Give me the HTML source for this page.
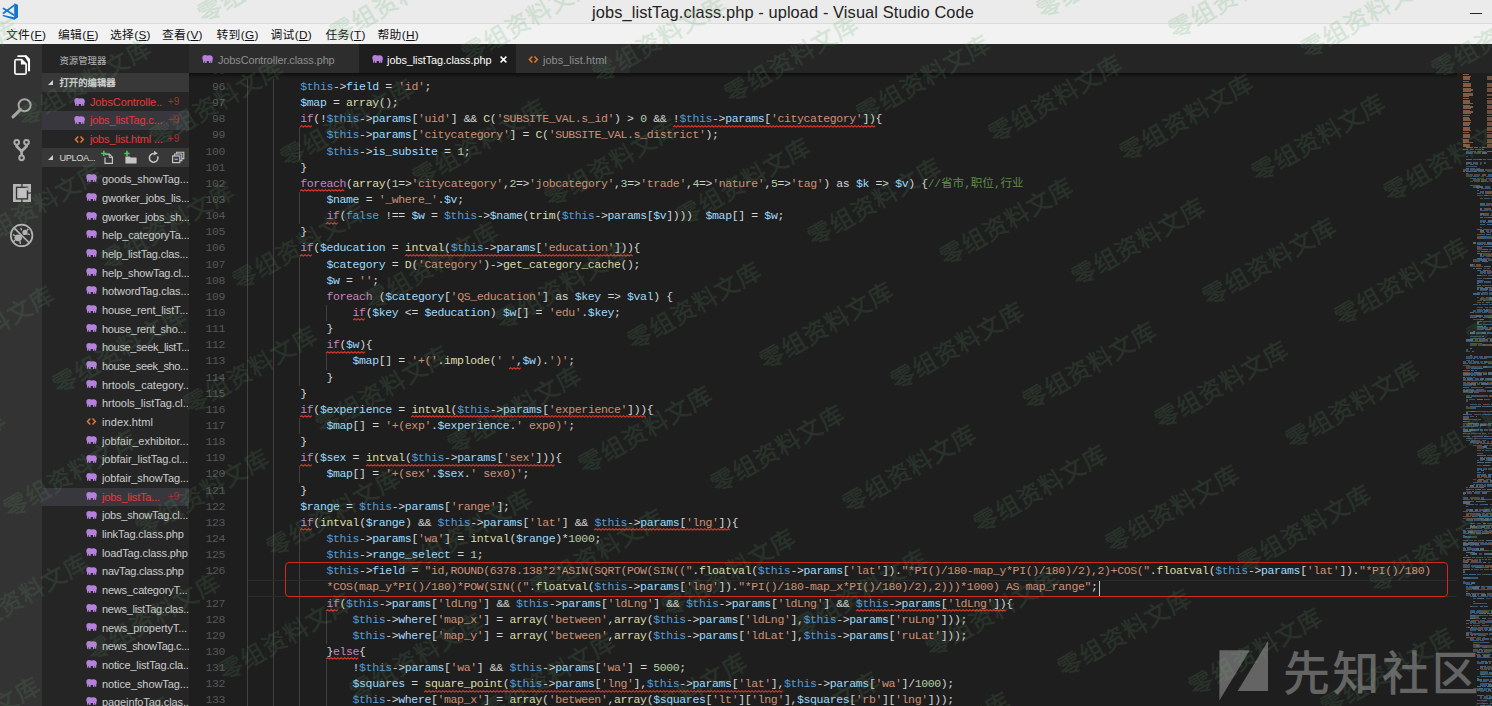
<!DOCTYPE html>
<html lang="zh-CN">
<head>
<meta charset="utf-8">
<title>jobs_listTag.class.php - upload - Visual Studio Code</title>
<style>
*{box-sizing:border-box;margin:0;padding:0}
html,body{width:1492px;height:706px;overflow:hidden;background:#1e1e1e}
body{position:relative;font-family:"Liberation Sans","Noto Sans CJK SC",sans-serif;font-size:11px;color:#ccc}
.abs{position:absolute}
#titlebar{position:absolute;left:0;top:0;width:1492px;height:24px;background:#ebebeb;border-bottom:1px solid #dcdcdc}
#titlebar .t{position:absolute;left:592px;top:0;height:24px;line-height:24px;font-size:16.4px;color:#222;white-space:nowrap}
#titlebar .min{position:absolute;left:1470px;top:13px;width:12px;height:1.3px;background:#222}
#menu{position:absolute;left:0;top:24px;width:1492px;height:20px;background:#f2f2f2}
#menu span{position:absolute;top:2px;height:20px;line-height:19px;font-size:11.8px;letter-spacing:0.3px;color:#111;white-space:nowrap}
#menu u{text-decoration:underline;text-underline-offset:1px}
#act{position:absolute;left:0;top:44px;width:42.4px;height:662px;background:#333333}
#side{position:absolute;left:42.4px;top:44px;width:146.8px;height:662px;background:#252526;overflow:hidden}
#side .hd{position:absolute;left:17px;top:8px;font-size:9.4px;color:#bdbdbd;line-height:18px;white-space:nowrap}
.sec{position:absolute;left:0;width:146.8px;height:18.6px;background:#383838;color:#d8d8d8;font-size:9.4px;font-weight:normal;-webkit-text-stroke:0.3px #d8d8d8;line-height:20.4px;white-space:nowrap}
.sec .tri{position:absolute;left:6px;top:7px;width:0;height:0;border-left:5px solid transparent;border-bottom:5px solid #d0d0d0}
.sec .tx{position:absolute;left:17px;top:0}
.oe{position:absolute;left:0;width:146.8px;height:18.68px;line-height:18.4px;font-size:11px;color:#e8383d;white-space:nowrap}
.oe.sel,.fr.sel{background:#37373d}
.oe .fi{position:absolute;left:31.2px;top:5.2px}
.oe .nm{position:absolute;left:47.5px;top:0}
.oe .bad{position:absolute;left:125.4px;top:0;font-size:10px;color:#a33434}
.fr{position:absolute;left:0;width:146.8px;height:18.68px;line-height:18px;font-size:11px;color:#cdcdcd;white-space:nowrap;overflow:hidden}
.fr .fi{position:absolute;left:43.4px;top:4.2px}
.fr .fn_{position:absolute;left:59.6px;top:0}
.fr.err{color:#e8383d}
.fr .bad{position:absolute;left:125.3px;top:0;font-size:10px;color:#a33434}
#tabs{position:absolute;left:189.2px;top:44px;width:1302.8px;height:29.4px;background:#252526}
.tab{position:absolute;top:0;height:29.4px;background:#2d2d2d;color:#8f8f8f;font-size:10.9px;line-height:32px;white-space:nowrap}
.tab.act{background:#1e1e1e;color:#fff}
.tab .fi{position:absolute;top:10.8px;left:12.4px}
.tab .nm{position:absolute;top:0}
#ed{position:absolute;left:189.2px;top:73.4px;width:1302.8px;height:632.6px;background:#1e1e1e;overflow:hidden}
#edin{position:absolute;left:-189.2px;top:-73.4px;width:1492px;height:706px}
.cl{position:absolute;left:248px;height:16.14px;line-height:16.14px;white-space:pre;font-family:"Liberation Mono","Noto Sans CJK SC",monospace;font-size:11.50px;letter-spacing:-0.3671px;color:#d4d4d4}
.ln{position:absolute;left:188px;width:37px;text-align:right;height:16.14px;line-height:16.14px;font-family:"Liberation Mono",monospace;font-size:11.50px;letter-spacing:-0.3671px;color:#575757}
.ig{position:absolute;width:1px;background:#404040}
.sq{position:absolute;overflow:visible}
.sq polyline{fill:none;stroke:#d8382b;stroke-width:1.05;stroke-linejoin:round}
.this,.cst{color:#569cd6}.var,.prop{color:#9cdcfe}.str{color:#ce9178}.num{color:#b5cea8}.kw{color:#c586c0}.fn{color:#dcdcaa}.cmt{color:#608b4e}.cj{font-size:11.6px;letter-spacing:0.02px}
#shadow{position:absolute;left:189.2px;top:73.4px;width:1268px;height:5px;background:linear-gradient(#000 0,rgba(0,0,0,0) 100%);opacity:.55}
#redbox{position:absolute;left:284.5px;top:562.2px;width:1163px;height:34.6px;border:1.2px solid #cf2a1c;border-radius:4px}
#curline{position:absolute;left:248px;top:580px;width:1209px;height:16.6px;border-top:1px solid #2b2b2b;border-bottom:1px solid #2b2b2b}
#cursor{position:absolute;top:581px;width:1.3px;height:14.5px;background:#c8c8c8}
#mm i{position:absolute;display:block;height:1.4px;opacity:.72}
#wm{position:absolute;left:0;top:44px;width:1492px;height:662px;overflow:hidden}#wmtop{position:absolute;left:0;top:0;width:1492px;height:44px;overflow:hidden}#wmtop .wm{color:rgb(95,175,105);-webkit-text-stroke:0.45px rgb(95,175,105);opacity:.2}.wm{position:absolute;white-space:nowrap;font-family:"Noto Sans CJK SC","Liberation Sans",sans-serif;font-size:24px;line-height:24px;height:24px;margin-top:-12px;color:rgb(120,190,125);-webkit-text-stroke:0.45px rgb(120,190,125);opacity:.125;transform-origin:0 50%;transform:rotate(-30deg);pointer-events:none;letter-spacing:1px}
#xz{position:absolute;left:1219px;top:641px;width:280px;height:62px;color:#5b5b5b}
#xz .tx{position:absolute;left:64px;top:0;font-family:"Noto Sans CJK SC","Liberation Sans",sans-serif;font-size:47px;line-height:58px;font-weight:500;white-space:nowrap;color:#646464;letter-spacing:2.5px}
</style>
</head>
<body>
<svg width="0" height="0" style="position:absolute">
 <defs>
  <g id="eleph" fill="#b681da">
   <circle cx="3.2" cy="3" r="2.9"/><ellipse cx="7.3" cy="3.2" rx="3.5" ry="3"/>
   <rect x="2.4" y="2" width="6" height="4"/>
   <rect x="1" y="3.6" width="1.5" height="4.1" rx="0.4"/><rect x="3" y="4" width="1.7" height="3.9"/>
   <rect x="7" y="4" width="1.5" height="3.9"/><rect x="8.9" y="4" width="1.4" height="3.7" rx="0.4"/>
  </g>
  <g id="angle" fill="none" stroke="#e37933" stroke-width="1.5">
   <polyline points="4.3,1.6 1.5,4.5 4.3,7.4"/>
   <polyline points="6.5,1.6 9.3,4.5 6.5,7.4"/>
  </g>
 </defs>
</svg>

<div id="titlebar">
 <svg class="abs" style="left:2px;top:3px" width="17" height="17" viewBox="0 0 17 17">
  <path d="M12.2 0.3L16 1.8V14.6L12.2 16.7L1.2 13.2L0.4 12.4L1.2 11.9L12.2 14.2Z" fill="#1177cc"/>
  <path d="M12.2 3.2L1.6 11.2L0.6 10.4V9.8L12.2 1.2Z M0.6 5.4L1.6 4.6L12.2 11.2V13.2L0.6 6Z" fill="#1177cc"/>
 </svg>
 <div class="t" id="title" style="letter-spacing:0.098px">jobs_listTag.class.php - upload - Visual Studio Code</div>
 <div class="min"></div>
</div>
<div id="menu">
 <span style="left:6px">文件(<u>F</u>)</span>
 <span style="left:58px">编辑(<u>E</u>)</span>
 <span style="left:110px">选择(<u>S</u>)</span>
 <span style="left:162px">查看(<u>V</u>)</span>
 <span style="left:216.5px">转到(<u>G</u>)</span>
 <span style="left:270.5px">调试(<u>D</u>)</span>
 <span style="left:325.5px">任务(<u>T</u>)</span>
 <span style="left:377.5px">帮助(<u>H</u>)</span>
</div>

<div id="act">
 <!-- explorer -->
 <svg class="abs" style="left:12px;top:9px" width="22" height="24" viewBox="0 0 22 24">
  <path d="M6.2 3.2H13.6" fill="none" stroke="#fff" stroke-width="1.8" stroke-linecap="round"/>
  <path d="M13.4 3.3L17 7V18.3" fill="none" stroke="#fff" stroke-width="2.1" stroke-linejoin="miter"/>
  <path d="M12.6 2.4H14.6L18 6V8.6L15.4 8.2Z" fill="#fff"/>
  <path d="M4.4 6.7H9.6L14.1 11V19.7Q14.1 21.2 12.6 21.2H4.4Q2.9 21.2 2.9 19.7V8.2Q2.9 6.7 4.4 6.7Z" fill="none" stroke="#f4f4f4" stroke-width="1.75"/>
  <path d="M8.9 6.2L14.8 11.5H8.9Z" fill="#fff"/>
 </svg>
 <!-- search -->
 <svg class="abs" style="left:10px;top:51px" width="24" height="24" viewBox="0 0 24 24">
  <circle cx="14.6" cy="10.2" r="6" fill="none" stroke="#a6a6a6" stroke-width="2"/>
  <path d="M10.4 14.6L3 21.8" stroke="#a6a6a6" stroke-width="3.1" stroke-linecap="round"/>
 </svg>
 <!-- git -->
 <svg class="abs" style="left:11px;top:92px" width="22" height="26" viewBox="0 0 22 26">
  <g fill="none" stroke="#acacac" stroke-width="2">
   <circle cx="5.7" cy="6.3" r="2.35"/><circle cx="15.5" cy="6.3" r="2.35"/><circle cx="10.6" cy="21.8" r="2.35"/>
   <path d="M5.6 8.7V10.3L10.6 15.2V19M15.6 8.7V10.3L10.6 15.2" stroke-width="2.7" stroke-linejoin="round"/>
  </g>
 </svg>
 <!-- extensions -->
 <svg class="abs" style="left:12.7px;top:139.5px" width="18" height="18.2" viewBox="0 0 18 18.2">
  <rect x="0" y="0" width="18" height="18.2" fill="#b6b6b6"/>
  <rect x="3.5" y="3.3" width="11" height="11.6" fill="none" stroke="#333" stroke-width="1.3"/>
  <rect x="8.3" y="0" width="1.3" height="3" fill="#333"/><rect x="8.3" y="15" width="1.3" height="3.2" fill="#333"/>
  <rect x="15" y="8.4" width="3" height="1.3" fill="#333"/>
  <rect x="5.3" y="4.8" width="7.6" height="8.8" fill="#c2c2c2"/>
  <rect x="12.6" y="3.6" width="2.6" height="2.8" fill="#b6b6b6"/>
 </svg>
 <!-- debug -->
 <svg class="abs" style="left:9px;top:179px" width="26" height="26" viewBox="0 0 26 26">
  <circle cx="12.6" cy="12.4" r="10.8" fill="none" stroke="#b4b4b4" stroke-width="1.7"/>
  <path d="M5 4.8L20.4 20" stroke="#b4b4b4" stroke-width="1.7"/>
  <ellipse cx="9.2" cy="14.8" rx="3.8" ry="3.4" fill="#b4b4b4"/>
  <circle cx="16" cy="9.4" r="2.6" fill="#b4b4b4"/>
  <path d="M12.6 7.4L11.8 5M17.8 7.4L19.4 5.8M18.4 11L20.8 11.6M6 12.6L3.8 11.6M6.2 17.2L4.4 18.8M10.8 18L11.4 20.8" stroke="#b4b4b4" stroke-width="1.4"/>
 </svg>
</div>

<div id="side">
 <div class="hd">资源管理器</div>
 <div class="sec" style="top:29.4px"><i class="tri"></i><span class="tx">打开的编辑器</span></div>
 <div class="oe" style="top:48.6px"><svg class="fi" width="11" height="9" viewBox="0 0 11 9"><use href="#eleph"/></svg><span class="nm" id="oe1" style="letter-spacing:-0.078px">JobsControlle..</span><span class="bad" id="b1" style="letter-spacing:0.097px">+9</span></div>
 <div class="oe sel" style="top:67.2px"><svg class="fi" width="11" height="9" viewBox="0 0 11 9"><use href="#eleph"/></svg><span class="nm" id="oe2" style="letter-spacing:-0.159px">jobs_listTag.c...</span><span class="bad" id="b2" style="letter-spacing:0.097px">+9</span></div>
 <div class="oe" style="top:85.8px"><svg class="fi" width="11" height="9" viewBox="0 0 11 9"><use href="#angle"/></svg><span class="nm" id="oe3" style="letter-spacing:-0.167px">jobs_list.html ...</span><span class="bad" id="b3" style="letter-spacing:0.097px">+9</span></div>
 <div class="sec" style="top:104.2px"><i class="tri"></i><span class="tx" id="up" style="font-size:9.2px;font-weight:normal;-webkit-text-stroke:0;letter-spacing:-0.377px">UPLOA...</span>
  <svg class="abs" style="left:57px;top:2px" width="90" height="15" viewBox="0 0 90 15">
   <g fill="none" stroke="#c5c5c5" stroke-width="1.2">
    <path d="M6 4.2H10.4L13.4 7.2V13.4H6V7.6"/><path d="M10.2 4.2V7.4H13.4" stroke-width="1"/>
    <path d="M54.8 3.6A4.3 4.3 0 1 0 58.6 6.2" stroke-width="1.5"/>
    <rect x="73.6" y="6" width="7.2" height="6.6"/><path d="M75.6 6V4H82.8V10.6H80.8M77.6 4V2.2H84.8V8.6H82.8" stroke-width="1.1"/>
   </g>
   <path d="M26.4 6.4H30.6L31.8 7.6H37.6V13.6H26.4Z" fill="#c5c5c5"/>
   <path d="M55.2 0.8L58.8 3.6L54.6 5.6Z" fill="#c5c5c5"/>
   <rect x="75.4" y="8.6" width="3.6" height="1.4" fill="#6aa5e8"/>
   <g stroke="#4ec95e" stroke-width="1.5"><path d="M2.2 3.4H7.4M4.8 0.8V6"/><path d="M25.4 3.4H30.6M28 0.8V6"/></g>
  </svg>
 </div>
 <div style="position:absolute;left:0;top:-44px;width:146.8px;height:706px">
<div class="fr" style="top:170.20px"><svg class="fi" width="11" height="9" viewBox="0 0 11 9"><use href="#eleph"/></svg><span class="fn_" id="f0" style="letter-spacing:-0.129px">goods_showTag...</span></div>
<div class="fr" style="top:188.88px"><svg class="fi" width="11" height="9" viewBox="0 0 11 9"><use href="#eleph"/></svg><span class="fn_" id="f1" style="letter-spacing:-0.189px">gworker_jobs_lis...</span></div>
<div class="fr" style="top:207.56px"><svg class="fi" width="11" height="9" viewBox="0 0 11 9"><use href="#eleph"/></svg><span class="fn_" id="f2" style="letter-spacing:-0.268px">gworker_jobs_sh...</span></div>
<div class="fr" style="top:226.24px"><svg class="fi" width="11" height="9" viewBox="0 0 11 9"><use href="#eleph"/></svg><span class="fn_" id="f3" style="letter-spacing:-0.133px">help_categoryTa...</span></div>
<div class="fr" style="top:244.92px"><svg class="fi" width="11" height="9" viewBox="0 0 11 9"><use href="#eleph"/></svg><span class="fn_" id="f4" style="letter-spacing:-0.190px">help_listTag.clas...</span></div>
<div class="fr" style="top:263.60px"><svg class="fi" width="11" height="9" viewBox="0 0 11 9"><use href="#eleph"/></svg><span class="fn_" id="f5" style="letter-spacing:-0.167px">help_showTag.cl...</span></div>
<div class="fr" style="top:282.28px"><svg class="fi" width="11" height="9" viewBox="0 0 11 9"><use href="#eleph"/></svg><span class="fn_" id="f6" style="letter-spacing:-0.064px">hotwordTag.clas...</span></div>
<div class="fr" style="top:300.96px"><svg class="fi" width="11" height="9" viewBox="0 0 11 9"><use href="#eleph"/></svg><span class="fn_" id="f7" style="letter-spacing:-0.167px">house_rent_listT...</span></div>
<div class="fr" style="top:319.64px"><svg class="fi" width="11" height="9" viewBox="0 0 11 9"><use href="#eleph"/></svg><span class="fn_" id="f8" style="letter-spacing:-0.240px">house_rent_sho...</span></div>
<div class="fr" style="top:338.32px"><svg class="fi" width="11" height="9" viewBox="0 0 11 9"><use href="#eleph"/></svg><span class="fn_" id="f9" style="letter-spacing:-0.319px">house_seek_listT...</span></div>
<div class="fr" style="top:357.00px"><svg class="fi" width="11" height="9" viewBox="0 0 11 9"><use href="#eleph"/></svg><span class="fn_" id="f10" style="letter-spacing:-0.368px">house_seek_sho...</span></div>
<div class="fr" style="top:375.68px"><svg class="fi" width="11" height="9" viewBox="0 0 11 9"><use href="#eleph"/></svg><span class="fn_" id="f11" style="letter-spacing:0.010px">hrtools_category..</span></div>
<div class="fr" style="top:394.36px"><svg class="fi" width="11" height="9" viewBox="0 0 11 9"><use href="#eleph"/></svg><span class="fn_" id="f12" style="letter-spacing:-0.032px">hrtools_listTag.cl..</span></div>
<div class="fr" style="top:413.04px"><svg class="fi" width="11" height="9" viewBox="0 0 11 9"><use href="#angle"/></svg><span class="fn_" id="f13" style="letter-spacing:0.086px">index.html</span></div>
<div class="fr" style="top:431.72px"><svg class="fi" width="11" height="9" viewBox="0 0 11 9"><use href="#eleph"/></svg><span class="fn_" id="f14" style="letter-spacing:0.029px">jobfair_exhibitor...</span></div>
<div class="fr" style="top:450.40px"><svg class="fi" width="11" height="9" viewBox="0 0 11 9"><use href="#eleph"/></svg><span class="fn_" id="f15" style="letter-spacing:-0.064px">jobfair_listTag.cl...</span></div>
<div class="fr" style="top:469.08px"><svg class="fi" width="11" height="9" viewBox="0 0 11 9"><use href="#eleph"/></svg><span class="fn_" id="f16" style="letter-spacing:-0.104px">jobfair_showTag...</span></div>
<div class="fr sel err" style="top:487.76px"><svg class="fi" width="11" height="9" viewBox="0 0 11 9"><use href="#eleph"/></svg><span class="fn_" id="f17" style="letter-spacing:-0.188px">jobs_listTa...</span><span class="bad" id="b4" style="letter-spacing:0.097px">+9</span></div>
<div class="fr" style="top:506.44px"><svg class="fi" width="11" height="9" viewBox="0 0 11 9"><use href="#eleph"/></svg><span class="fn_" id="f18" style="letter-spacing:-0.211px">jobs_showTag.cl...</span></div>
<div class="fr" style="top:525.12px"><svg class="fi" width="11" height="9" viewBox="0 0 11 9"><use href="#eleph"/></svg><span class="fn_" id="f19" style="letter-spacing:-0.122px">linkTag.class.php</span></div>
<div class="fr" style="top:543.80px"><svg class="fi" width="11" height="9" viewBox="0 0 11 9"><use href="#eleph"/></svg><span class="fn_" id="f20" style="letter-spacing:-0.133px">loadTag.class.php</span></div>
<div class="fr" style="top:562.48px"><svg class="fi" width="11" height="9" viewBox="0 0 11 9"><use href="#eleph"/></svg><span class="fn_" id="f21" style="letter-spacing:-0.206px">navTag.class.php</span></div>
<div class="fr" style="top:581.16px"><svg class="fi" width="11" height="9" viewBox="0 0 11 9"><use href="#eleph"/></svg><span class="fn_" id="f22" style="letter-spacing:-0.192px">news_categoryT...</span></div>
<div class="fr" style="top:599.84px"><svg class="fi" width="11" height="9" viewBox="0 0 11 9"><use href="#eleph"/></svg><span class="fn_" id="f23" style="letter-spacing:-0.259px">news_listTag.clas..</span></div>
<div class="fr" style="top:618.52px"><svg class="fi" width="11" height="9" viewBox="0 0 11 9"><use href="#eleph"/></svg><span class="fn_" id="f24" style="letter-spacing:-0.102px">news_propertyT...</span></div>
<div class="fr" style="top:637.20px"><svg class="fi" width="11" height="9" viewBox="0 0 11 9"><use href="#eleph"/></svg><span class="fn_" id="f25" style="letter-spacing:-0.320px">news_showTag.c...</span></div>
<div class="fr" style="top:655.88px"><svg class="fi" width="11" height="9" viewBox="0 0 11 9"><use href="#eleph"/></svg><span class="fn_" id="f26" style="letter-spacing:-0.155px">notice_listTag.cla..</span></div>
<div class="fr" style="top:674.56px"><svg class="fi" width="11" height="9" viewBox="0 0 11 9"><use href="#eleph"/></svg><span class="fn_" id="f27" style="letter-spacing:-0.074px">notice_showTag...</span></div>
<div class="fr" style="top:693.24px"><svg class="fi" width="11" height="9" viewBox="0 0 11 9"><use href="#eleph"/></svg><span class="fn_" id="f28" style="letter-spacing:-0.104px">pageinfoTag.clas..</span></div>
 </div>
</div>

<div id="tabs">
 <div class="tab" style="left:0;width:170.3px"><svg class="fi" width="11" height="9" viewBox="0 0 11 9"><use href="#eleph"/></svg><span class="nm" id="tab1" style="left:28.8px;letter-spacing:-0.086px">JobsController.class.php</span></div>
 <div class="tab act" style="left:170.3px;width:156.4px"><svg class="fi" width="11" height="9" viewBox="0 0 11 9"><use href="#eleph"/></svg><span class="nm" id="tab2" style="left:27.6px;letter-spacing:-0.075px">jobs_listTag.class.php</span>
  <svg class="abs" style="left:140.6px;top:11.8px" width="7" height="7" viewBox="0 0 7 7"><path d="M0.6 0.6L6.4 6.4M6.4 0.6L0.6 6.4" stroke="#fff" stroke-width="1.5"/></svg>
 </div>
 <div class="tab" style="left:326.7px;width:114.6px"><svg class="fi" width="11" height="9" viewBox="0 0 11 9"><use href="#angle"/></svg><span class="nm" id="tab3" style="left:27.1px;letter-spacing:0.060px">jobs_list.html</span></div>
</div>

<div id="ed"><div id="edin">
<div class="ig" style="left:247.20px;top:79.00px;height:629.58px"></div>
<div class="ig" style="left:273.34px;top:79.00px;height:629.58px"></div>
<div class="ig" style="left:299.47px;top:127.43px;height:32.29px"></div>
<div class="ig" style="left:299.47px;top:192.00px;height:32.29px"></div>
<div class="ig" style="left:299.47px;top:256.57px;height:129.14px"></div>
<div class="ig" style="left:299.47px;top:418.00px;height:16.14px"></div>
<div class="ig" style="left:299.47px;top:466.43px;height:16.14px"></div>
<div class="ig" style="left:299.47px;top:531.00px;height:177.57px"></div>
<div class="ig" style="left:325.61px;top:305.00px;height:16.14px"></div>
<div class="ig" style="left:325.61px;top:353.43px;height:16.14px"></div>
<div class="ig" style="left:325.61px;top:611.72px;height:32.29px"></div>
<div class="ig" style="left:325.61px;top:660.15px;height:48.43px"></div>
<div id="curline"></div>
<div class="ln" style="top:62.86px">95</div>
<div class="ln" style="top:79.00px">96</div>
<div class="ln" style="top:95.14px">97</div>
<div class="ln" style="top:111.29px">98</div>
<div class="ln" style="top:127.43px">99</div>
<div class="ln" style="top:143.57px">100</div>
<div class="ln" style="top:159.72px">101</div>
<div class="ln" style="top:175.86px">102</div>
<div class="ln" style="top:192.00px">103</div>
<div class="ln" style="top:208.14px">104</div>
<div class="ln" style="top:224.29px">105</div>
<div class="ln" style="top:240.43px">106</div>
<div class="ln" style="top:256.57px">107</div>
<div class="ln" style="top:272.72px">108</div>
<div class="ln" style="top:288.86px">109</div>
<div class="ln" style="top:305.00px">110</div>
<div class="ln" style="top:321.14px">111</div>
<div class="ln" style="top:337.29px">112</div>
<div class="ln" style="top:353.43px">113</div>
<div class="ln" style="top:369.57px">114</div>
<div class="ln" style="top:385.72px">115</div>
<div class="ln" style="top:401.86px">116</div>
<div class="ln" style="top:418.00px">117</div>
<div class="ln" style="top:434.15px">118</div>
<div class="ln" style="top:450.29px">119</div>
<div class="ln" style="top:466.43px">120</div>
<div class="ln" style="top:482.58px">121</div>
<div class="ln" style="top:498.72px">122</div>
<div class="ln" style="top:514.86px">123</div>
<div class="ln" style="top:531.00px">124</div>
<div class="ln" style="top:547.15px">125</div>
<div class="ln" style="top:563.29px">126</div>
<div class="ln" style="top:595.58px">127</div>
<div class="ln" style="top:611.72px">128</div>
<div class="ln" style="top:627.86px">129</div>
<div class="ln" style="top:644.00px">130</div>
<div class="ln" style="top:660.15px">131</div>
<div class="ln" style="top:676.29px">132</div>
<div class="ln" style="top:692.43px">133</div>
<div class="cl" style="top:62.86px"></div>
<div class="cl" style="top:79.00px">        <span class="this">$this</span>-&gt;<span class="prop">field</span> = <span class="str">'id'</span>;</div>
<div class="cl" style="top:95.14px">        <span class="var">$map</span> = <span class="fn">array</span>();</div>
<div class="cl" style="top:111.29px">        <span class="kw">if</span>(!<span class="this">$this</span>-&gt;<span class="prop">params</span>[<span class="str">'uid'</span>] &amp;&amp; <span class="fn">C</span>(<span class="str">'SUBSITE_VAL.s_id'</span>) &gt; <span class="num">0</span> &amp;&amp; !<span class="this">$this</span>-&gt;<span class="prop">params</span>[<span class="str">'citycategory'</span>]){</div>
<div class="cl" style="top:127.43px">            <span class="this">$this</span>-&gt;<span class="prop">params</span>[<span class="str">'citycategory'</span>] = <span class="fn">C</span>(<span class="str">'SUBSITE_VAL.s_district'</span>);</div>
<div class="cl" style="top:143.57px">            <span class="this">$this</span>-&gt;<span class="prop">is_subsite</span> = <span class="num">1</span>;</div>
<div class="cl" style="top:159.72px">        }</div>
<div class="cl" style="top:175.86px">        <span class="kw">foreach</span>(<span class="fn">array</span>(<span class="num">1</span>=&gt;<span class="str">'citycategory'</span>,<span class="num">2</span>=&gt;<span class="str">'jobcategory'</span>,<span class="num">3</span>=&gt;<span class="str">'trade'</span>,<span class="num">4</span>=&gt;<span class="str">'nature'</span>,<span class="num">5</span>=&gt;<span class="str">'tag'</span>) as <span class="var">$k</span> =&gt; <span class="var">$v</span>) {<span class="cmt">//<span class="cj">省市</span>,<span class="cj">职位</span>,<span class="cj">行业</span></span></div>
<div class="cl" style="top:192.00px">            <span class="var">$name</span> = <span class="str">'_where_'</span>.<span class="var">$v</span>;</div>
<div class="cl" style="top:208.14px">            <span class="kw">if</span>(<span class="cst">false</span> !== <span class="var">$w</span> = <span class="this">$this</span>-&gt;<span class="var">$name</span>(<span class="fn">trim</span>(<span class="this">$this</span>-&gt;<span class="prop">params</span>[<span class="var">$v</span>])))  <span class="var">$map</span>[] = <span class="var">$w</span>;</div>
<div class="cl" style="top:224.29px">        }</div>
<div class="cl" style="top:240.43px">        <span class="kw">if</span>(<span class="var">$education</span> = <span class="fn">intval</span>(<span class="this">$this</span>-&gt;<span class="prop">params</span>[<span class="str">'education'</span>])){</div>
<div class="cl" style="top:256.57px">            <span class="var">$category</span> = <span class="fn">D</span>(<span class="str">'Category'</span>)-&gt;<span class="fn">get_category_cache</span>();</div>
<div class="cl" style="top:272.72px">            <span class="var">$w</span> = <span class="str">''</span>;</div>
<div class="cl" style="top:288.86px">            <span class="kw">foreach</span> (<span class="var">$category</span>[<span class="str">'QS_education'</span>] as <span class="var">$key</span> =&gt; <span class="var">$val</span>) {</div>
<div class="cl" style="top:305.00px">                <span class="kw">if</span>(<span class="var">$key</span> &lt;= <span class="var">$education</span>) <span class="var">$w</span>[] = <span class="str">'edu'</span>.<span class="var">$key</span>;</div>
<div class="cl" style="top:321.14px">            }</div>
<div class="cl" style="top:337.29px">            <span class="kw">if</span>(<span class="var">$w</span>){</div>
<div class="cl" style="top:353.43px">                <span class="var">$map</span>[] = <span class="str">'+('</span>.<span class="fn">implode</span>(<span class="str">' '</span>,<span class="var">$w</span>).<span class="str">')'</span>;</div>
<div class="cl" style="top:369.57px">            }</div>
<div class="cl" style="top:385.72px">        }</div>
<div class="cl" style="top:401.86px">        <span class="kw">if</span>(<span class="var">$experience</span> = <span class="fn">intval</span>(<span class="this">$this</span>-&gt;<span class="prop">params</span>[<span class="str">'experience'</span>])){</div>
<div class="cl" style="top:418.00px">            <span class="var">$map</span>[] = <span class="str">'+(exp'</span>.<span class="var">$experience</span>.<span class="str">' exp0)'</span>;</div>
<div class="cl" style="top:434.15px">        }</div>
<div class="cl" style="top:450.29px">        <span class="kw">if</span>(<span class="var">$sex</span> = <span class="fn">intval</span>(<span class="this">$this</span>-&gt;<span class="prop">params</span>[<span class="str">'sex'</span>])){</div>
<div class="cl" style="top:466.43px">            <span class="var">$map</span>[] = <span class="str">'+(sex'</span>.<span class="var">$sex</span>.<span class="str">' sex0)'</span>;</div>
<div class="cl" style="top:482.58px">        }</div>
<div class="cl" style="top:498.72px">        <span class="var">$range</span> = <span class="this">$this</span>-&gt;<span class="prop">params</span>[<span class="str">'range'</span>];</div>
<div class="cl" style="top:514.86px">        <span class="kw">if</span>(<span class="fn">intval</span>(<span class="var">$range</span>) &amp;&amp; <span class="this">$this</span>-&gt;<span class="prop">params</span>[<span class="str">'lat'</span>] &amp;&amp; <span class="this">$this</span>-&gt;<span class="prop">params</span>[<span class="str">'lng'</span>]){</div>
<div class="cl" style="top:531.00px">            <span class="this">$this</span>-&gt;<span class="prop">params</span>[<span class="str">'wa'</span>] = <span class="fn">intval</span>(<span class="var">$range</span>)*<span class="num">1000</span>;</div>
<div class="cl" style="top:547.15px">            <span class="this">$this</span>-&gt;<span class="prop">range_select</span> = <span class="num">1</span>;</div>
<div class="cl" style="top:563.29px">            <span class="this">$this</span>-&gt;<span class="prop">field</span> = <span class="str">"id,ROUND(6378.138*2*ASIN(SQRT(POW(SIN(("</span>.<span class="fn">floatval</span>(<span class="this">$this</span>-&gt;<span class="prop">params</span>[<span class="str">'lat'</span>]).<span class="str">"*PI()/180-map_y*PI()/180)/2),2)+COS("</span>.<span class="fn">floatval</span>(<span class="this">$this</span>-&gt;<span class="prop">params</span>[<span class="str">'lat'</span>]).<span class="str">"*PI()/180)</span></div>
<div class="cl" style="top:579.43px">            <span class="str">*COS(map_y*PI()/180)*POW(SIN(("</span>.<span class="fn">floatval</span>(<span class="this">$this</span>-&gt;<span class="prop">params</span>[<span class="str">'lng'</span>]).<span class="str">"*PI()/180-map_x*PI()/180)/2),2)))*1000) AS map_range"</span>;</div>
<div class="cl" style="top:595.58px">            <span class="kw">if</span>(<span class="this">$this</span>-&gt;<span class="prop">params</span>[<span class="str">'ldLng'</span>] &amp;&amp; <span class="this">$this</span>-&gt;<span class="prop">params</span>[<span class="str">'ldLng'</span>] &amp;&amp; <span class="this">$this</span>-&gt;<span class="prop">params</span>[<span class="str">'ldLng'</span>] &amp;&amp; <span class="this">$this</span>-&gt;<span class="prop">params</span>[<span class="str">'ldLng'</span>]){</div>
<div class="cl" style="top:611.72px">                <span class="this">$this</span>-&gt;<span class="prop">where</span>[<span class="str">'map_x'</span>] = <span class="fn">array</span>(<span class="str">'between'</span>,<span class="fn">array</span>(<span class="this">$this</span>-&gt;<span class="prop">params</span>[<span class="str">'ldLng'</span>],<span class="this">$this</span>-&gt;<span class="prop">params</span>[<span class="str">'ruLng'</span>]));</div>
<div class="cl" style="top:627.86px">                <span class="this">$this</span>-&gt;<span class="prop">where</span>[<span class="str">'map_y'</span>] = <span class="fn">array</span>(<span class="str">'between'</span>,<span class="fn">array</span>(<span class="this">$this</span>-&gt;<span class="prop">params</span>[<span class="str">'ldLat'</span>],<span class="this">$this</span>-&gt;<span class="prop">params</span>[<span class="str">'ruLat'</span>]));</div>
<div class="cl" style="top:644.00px">            }<span class="kw">else</span>{</div>
<div class="cl" style="top:660.15px">                !<span class="this">$this</span>-&gt;<span class="prop">params</span>[<span class="str">'wa'</span>] &amp;&amp; <span class="this">$this</span>-&gt;<span class="prop">params</span>[<span class="str">'wa'</span>] = <span class="num">5000</span>;</div>
<div class="cl" style="top:676.29px">                <span class="var">$squares</span> = <span class="fn">square_point</span>(<span class="this">$this</span>-&gt;<span class="prop">params</span>[<span class="str">'lng'</span>],<span class="this">$this</span>-&gt;<span class="prop">params</span>[<span class="str">'lat'</span>],<span class="this">$this</span>-&gt;<span class="prop">params</span>[<span class="str">'wa'</span>]/<span class="num">1000</span>);</div>
<div class="cl" style="top:692.43px">                <span class="this">$this</span>-&gt;<span class="prop">where</span>[<span class="str">'map_x'</span>] = <span class="fn">array</span>(<span class="str">'between'</span>,<span class="fn">array</span>(<span class="var">$squares</span>[<span class="str">'lt'</span>][<span class="str">'lng'</span>],<span class="var">$squares</span>[<span class="str">'rb'</span>][<span class="str">'lng'</span>]));</div>
<svg class="sq" style="left:300.27px;top:124.69px" width="14.1" height="4" viewBox="0 0 14.1 4"><polyline points="0.0,2.2 1.7,0.6 3.4,2.2 5.1,0.6 6.8,2.2 8.5,0.6 10.2,2.2 11.9,0.6"/></svg>
<svg class="sq" style="left:672.71px;top:124.69px" width="203.6" height="4" viewBox="0 0 203.6 4"><polyline points="0.0,2.2 1.7,0.6 3.4,2.2 5.1,0.6 6.8,2.2 8.5,0.6 10.2,2.2 11.9,0.6 13.6,2.2 15.3,0.6 17.0,2.2 18.7,0.6 20.4,2.2 22.1,0.6 23.8,2.2 25.5,0.6 27.2,2.2 28.9,0.6 30.6,2.2 32.3,0.6 34.0,2.2 35.7,0.6 37.4,2.2 39.1,0.6 40.8,2.2 42.5,0.6 44.2,2.2 45.9,0.6 47.6,2.2 49.3,0.6 51.0,2.2 52.7,0.6 54.4,2.2 56.1,0.6 57.8,2.2 59.5,0.6 61.2,2.2 62.9,0.6 64.6,2.2 66.3,0.6 68.0,2.2 69.7,0.6 71.4,2.2 73.1,0.6 74.8,2.2 76.5,0.6 78.2,2.2 79.9,0.6 81.6,2.2 83.3,0.6 85.0,2.2 86.7,0.6 88.4,2.2 90.1,0.6 91.8,2.2 93.5,0.6 95.2,2.2 96.9,0.6 98.6,2.2 100.3,0.6 102.0,2.2 103.7,0.6 105.4,2.2 107.1,0.6 108.8,2.2 110.5,0.6 112.2,2.2 113.9,0.6 115.6,2.2 117.3,0.6 119.0,2.2 120.7,0.6 122.4,2.2 124.1,0.6 125.8,2.2 127.5,0.6 129.2,2.2 130.9,0.6 132.6,2.2 134.3,0.6 136.0,2.2 137.7,0.6 139.4,2.2 141.1,0.6 142.8,2.2 144.5,0.6 146.2,2.2 147.9,0.6 149.6,2.2 151.3,0.6 153.0,2.2 154.7,0.6 156.4,2.2 158.1,0.6 159.8,2.2 161.5,0.6 163.2,2.2 164.9,0.6 166.6,2.2 168.3,0.6 170.0,2.2 171.7,0.6 173.4,2.2 175.1,0.6 176.8,2.2 178.5,0.6 180.2,2.2 181.9,0.6 183.6,2.2 185.3,0.6 187.0,2.2 188.7,0.6 190.4,2.2 192.1,0.6 193.8,2.2 195.5,0.6 197.2,2.2 198.9,0.6 200.6,2.2 202.3,0.6"/></svg>
<svg class="sq" style="left:300.27px;top:189.26px" width="46.7" height="4" viewBox="0 0 46.7 4"><polyline points="0.0,2.2 1.7,0.6 3.4,2.2 5.1,0.6 6.8,2.2 8.5,0.6 10.2,2.2 11.9,0.6 13.6,2.2 15.3,0.6 17.0,2.2 18.7,0.6 20.4,2.2 22.1,0.6 23.8,2.2 25.5,0.6 27.2,2.2 28.9,0.6 30.6,2.2 32.3,0.6 34.0,2.2 35.7,0.6 37.4,2.2 39.1,0.6 40.8,2.2 42.5,0.6 44.2,2.2"/></svg>
<svg class="sq" style="left:326.41px;top:221.54px" width="14.1" height="4" viewBox="0 0 14.1 4"><polyline points="0.0,2.2 1.7,0.6 3.4,2.2 5.1,0.6 6.8,2.2 8.5,0.6 10.2,2.2 11.9,0.6"/></svg>
<svg class="sq" style="left:300.27px;top:253.83px" width="14.1" height="4" viewBox="0 0 14.1 4"><polyline points="0.0,2.2 1.7,0.6 3.4,2.2 5.1,0.6 6.8,2.2 8.5,0.6 10.2,2.2 11.9,0.6"/></svg>
<svg class="sq" style="left:404.82px;top:253.83px" width="229.7" height="4" viewBox="0 0 229.7 4"><polyline points="0.0,2.2 1.7,0.6 3.4,2.2 5.1,0.6 6.8,2.2 8.5,0.6 10.2,2.2 11.9,0.6 13.6,2.2 15.3,0.6 17.0,2.2 18.7,0.6 20.4,2.2 22.1,0.6 23.8,2.2 25.5,0.6 27.2,2.2 28.9,0.6 30.6,2.2 32.3,0.6 34.0,2.2 35.7,0.6 37.4,2.2 39.1,0.6 40.8,2.2 42.5,0.6 44.2,2.2 45.9,0.6 47.6,2.2 49.3,0.6 51.0,2.2 52.7,0.6 54.4,2.2 56.1,0.6 57.8,2.2 59.5,0.6 61.2,2.2 62.9,0.6 64.6,2.2 66.3,0.6 68.0,2.2 69.7,0.6 71.4,2.2 73.1,0.6 74.8,2.2 76.5,0.6 78.2,2.2 79.9,0.6 81.6,2.2 83.3,0.6 85.0,2.2 86.7,0.6 88.4,2.2 90.1,0.6 91.8,2.2 93.5,0.6 95.2,2.2 96.9,0.6 98.6,2.2 100.3,0.6 102.0,2.2 103.7,0.6 105.4,2.2 107.1,0.6 108.8,2.2 110.5,0.6 112.2,2.2 113.9,0.6 115.6,2.2 117.3,0.6 119.0,2.2 120.7,0.6 122.4,2.2 124.1,0.6 125.8,2.2 127.5,0.6 129.2,2.2 130.9,0.6 132.6,2.2 134.3,0.6 136.0,2.2 137.7,0.6 139.4,2.2 141.1,0.6 142.8,2.2 144.5,0.6 146.2,2.2 147.9,0.6 149.6,2.2 151.3,0.6 153.0,2.2 154.7,0.6 156.4,2.2 158.1,0.6 159.8,2.2 161.5,0.6 163.2,2.2 164.9,0.6 166.6,2.2 168.3,0.6 170.0,2.2 171.7,0.6 173.4,2.2 175.1,0.6 176.8,2.2 178.5,0.6 180.2,2.2 181.9,0.6 183.6,2.2 185.3,0.6 187.0,2.2 188.7,0.6 190.4,2.2 192.1,0.6 193.8,2.2 195.5,0.6 197.2,2.2 198.9,0.6 200.6,2.2 202.3,0.6 204.0,2.2 205.7,0.6 207.4,2.2 209.1,0.6 210.8,2.2 212.5,0.6 214.2,2.2 215.9,0.6 217.6,2.2 219.3,0.6 221.0,2.2 222.7,0.6 224.4,2.2 226.1,0.6 227.8,2.2"/></svg>
<svg class="sq" style="left:352.54px;top:318.40px" width="14.1" height="4" viewBox="0 0 14.1 4"><polyline points="0.0,2.2 1.7,0.6 3.4,2.2 5.1,0.6 6.8,2.2 8.5,0.6 10.2,2.2 11.9,0.6"/></svg>
<svg class="sq" style="left:326.41px;top:350.69px" width="40.2" height="4" viewBox="0 0 40.2 4"><polyline points="0.0,2.2 1.7,0.6 3.4,2.2 5.1,0.6 6.8,2.2 8.5,0.6 10.2,2.2 11.9,0.6 13.6,2.2 15.3,0.6 17.0,2.2 18.7,0.6 20.4,2.2 22.1,0.6 23.8,2.2 25.5,0.6 27.2,2.2 28.9,0.6 30.6,2.2 32.3,0.6 34.0,2.2 35.7,0.6 37.4,2.2 39.1,0.6"/></svg>
<svg class="sq" style="left:509.36px;top:366.83px" width="14.1" height="4" viewBox="0 0 14.1 4"><polyline points="0.0,2.2 1.7,0.6 3.4,2.2 5.1,0.6 6.8,2.2 8.5,0.6 10.2,2.2 11.9,0.6"/></svg>
<svg class="sq" style="left:300.27px;top:415.26px" width="14.1" height="4" viewBox="0 0 14.1 4"><polyline points="0.0,2.2 1.7,0.6 3.4,2.2 5.1,0.6 6.8,2.2 8.5,0.6 10.2,2.2 11.9,0.6"/></svg>
<svg class="sq" style="left:411.35px;top:415.26px" width="236.2" height="4" viewBox="0 0 236.2 4"><polyline points="0.0,2.2 1.7,0.6 3.4,2.2 5.1,0.6 6.8,2.2 8.5,0.6 10.2,2.2 11.9,0.6 13.6,2.2 15.3,0.6 17.0,2.2 18.7,0.6 20.4,2.2 22.1,0.6 23.8,2.2 25.5,0.6 27.2,2.2 28.9,0.6 30.6,2.2 32.3,0.6 34.0,2.2 35.7,0.6 37.4,2.2 39.1,0.6 40.8,2.2 42.5,0.6 44.2,2.2 45.9,0.6 47.6,2.2 49.3,0.6 51.0,2.2 52.7,0.6 54.4,2.2 56.1,0.6 57.8,2.2 59.5,0.6 61.2,2.2 62.9,0.6 64.6,2.2 66.3,0.6 68.0,2.2 69.7,0.6 71.4,2.2 73.1,0.6 74.8,2.2 76.5,0.6 78.2,2.2 79.9,0.6 81.6,2.2 83.3,0.6 85.0,2.2 86.7,0.6 88.4,2.2 90.1,0.6 91.8,2.2 93.5,0.6 95.2,2.2 96.9,0.6 98.6,2.2 100.3,0.6 102.0,2.2 103.7,0.6 105.4,2.2 107.1,0.6 108.8,2.2 110.5,0.6 112.2,2.2 113.9,0.6 115.6,2.2 117.3,0.6 119.0,2.2 120.7,0.6 122.4,2.2 124.1,0.6 125.8,2.2 127.5,0.6 129.2,2.2 130.9,0.6 132.6,2.2 134.3,0.6 136.0,2.2 137.7,0.6 139.4,2.2 141.1,0.6 142.8,2.2 144.5,0.6 146.2,2.2 147.9,0.6 149.6,2.2 151.3,0.6 153.0,2.2 154.7,0.6 156.4,2.2 158.1,0.6 159.8,2.2 161.5,0.6 163.2,2.2 164.9,0.6 166.6,2.2 168.3,0.6 170.0,2.2 171.7,0.6 173.4,2.2 175.1,0.6 176.8,2.2 178.5,0.6 180.2,2.2 181.9,0.6 183.6,2.2 185.3,0.6 187.0,2.2 188.7,0.6 190.4,2.2 192.1,0.6 193.8,2.2 195.5,0.6 197.2,2.2 198.9,0.6 200.6,2.2 202.3,0.6 204.0,2.2 205.7,0.6 207.4,2.2 209.1,0.6 210.8,2.2 212.5,0.6 214.2,2.2 215.9,0.6 217.6,2.2 219.3,0.6 221.0,2.2 222.7,0.6 224.4,2.2 226.1,0.6 227.8,2.2 229.5,0.6 231.2,2.2 232.9,0.6 234.6,2.2"/></svg>
<svg class="sq" style="left:300.27px;top:463.69px" width="14.1" height="4" viewBox="0 0 14.1 4"><polyline points="0.0,2.2 1.7,0.6 3.4,2.2 5.1,0.6 6.8,2.2 8.5,0.6 10.2,2.2 11.9,0.6"/></svg>
<svg class="sq" style="left:365.61px;top:463.69px" width="190.5" height="4" viewBox="0 0 190.5 4"><polyline points="0.0,2.2 1.7,0.6 3.4,2.2 5.1,0.6 6.8,2.2 8.5,0.6 10.2,2.2 11.9,0.6 13.6,2.2 15.3,0.6 17.0,2.2 18.7,0.6 20.4,2.2 22.1,0.6 23.8,2.2 25.5,0.6 27.2,2.2 28.9,0.6 30.6,2.2 32.3,0.6 34.0,2.2 35.7,0.6 37.4,2.2 39.1,0.6 40.8,2.2 42.5,0.6 44.2,2.2 45.9,0.6 47.6,2.2 49.3,0.6 51.0,2.2 52.7,0.6 54.4,2.2 56.1,0.6 57.8,2.2 59.5,0.6 61.2,2.2 62.9,0.6 64.6,2.2 66.3,0.6 68.0,2.2 69.7,0.6 71.4,2.2 73.1,0.6 74.8,2.2 76.5,0.6 78.2,2.2 79.9,0.6 81.6,2.2 83.3,0.6 85.0,2.2 86.7,0.6 88.4,2.2 90.1,0.6 91.8,2.2 93.5,0.6 95.2,2.2 96.9,0.6 98.6,2.2 100.3,0.6 102.0,2.2 103.7,0.6 105.4,2.2 107.1,0.6 108.8,2.2 110.5,0.6 112.2,2.2 113.9,0.6 115.6,2.2 117.3,0.6 119.0,2.2 120.7,0.6 122.4,2.2 124.1,0.6 125.8,2.2 127.5,0.6 129.2,2.2 130.9,0.6 132.6,2.2 134.3,0.6 136.0,2.2 137.7,0.6 139.4,2.2 141.1,0.6 142.8,2.2 144.5,0.6 146.2,2.2 147.9,0.6 149.6,2.2 151.3,0.6 153.0,2.2 154.7,0.6 156.4,2.2 158.1,0.6 159.8,2.2 161.5,0.6 163.2,2.2 164.9,0.6 166.6,2.2 168.3,0.6 170.0,2.2 171.7,0.6 173.4,2.2 175.1,0.6 176.8,2.2 178.5,0.6 180.2,2.2 181.9,0.6 183.6,2.2 185.3,0.6 187.0,2.2 188.7,0.6"/></svg>
<svg class="sq" style="left:300.27px;top:528.26px" width="14.1" height="4" viewBox="0 0 14.1 4"><polyline points="0.0,2.2 1.7,0.6 3.4,2.2 5.1,0.6 6.8,2.2 8.5,0.6 10.2,2.2 11.9,0.6"/></svg>
<svg class="sq" style="left:594.30px;top:528.26px" width="138.2" height="4" viewBox="0 0 138.2 4"><polyline points="0.0,2.2 1.7,0.6 3.4,2.2 5.1,0.6 6.8,2.2 8.5,0.6 10.2,2.2 11.9,0.6 13.6,2.2 15.3,0.6 17.0,2.2 18.7,0.6 20.4,2.2 22.1,0.6 23.8,2.2 25.5,0.6 27.2,2.2 28.9,0.6 30.6,2.2 32.3,0.6 34.0,2.2 35.7,0.6 37.4,2.2 39.1,0.6 40.8,2.2 42.5,0.6 44.2,2.2 45.9,0.6 47.6,2.2 49.3,0.6 51.0,2.2 52.7,0.6 54.4,2.2 56.1,0.6 57.8,2.2 59.5,0.6 61.2,2.2 62.9,0.6 64.6,2.2 66.3,0.6 68.0,2.2 69.7,0.6 71.4,2.2 73.1,0.6 74.8,2.2 76.5,0.6 78.2,2.2 79.9,0.6 81.6,2.2 83.3,0.6 85.0,2.2 86.7,0.6 88.4,2.2 90.1,0.6 91.8,2.2 93.5,0.6 95.2,2.2 96.9,0.6 98.6,2.2 100.3,0.6 102.0,2.2 103.7,0.6 105.4,2.2 107.1,0.6 108.8,2.2 110.5,0.6 112.2,2.2 113.9,0.6 115.6,2.2 117.3,0.6 119.0,2.2 120.7,0.6 122.4,2.2 124.1,0.6 125.8,2.2 127.5,0.6 129.2,2.2 130.9,0.6 132.6,2.2 134.3,0.6 136.0,2.2"/></svg>
<svg class="sq" style="left:326.41px;top:608.98px" width="14.1" height="4" viewBox="0 0 14.1 4"><polyline points="0.0,2.2 1.7,0.6 3.4,2.2 5.1,0.6 6.8,2.2 8.5,0.6 10.2,2.2 11.9,0.6"/></svg>
<svg class="sq" style="left:855.66px;top:608.98px" width="151.3" height="4" viewBox="0 0 151.3 4"><polyline points="0.0,2.2 1.7,0.6 3.4,2.2 5.1,0.6 6.8,2.2 8.5,0.6 10.2,2.2 11.9,0.6 13.6,2.2 15.3,0.6 17.0,2.2 18.7,0.6 20.4,2.2 22.1,0.6 23.8,2.2 25.5,0.6 27.2,2.2 28.9,0.6 30.6,2.2 32.3,0.6 34.0,2.2 35.7,0.6 37.4,2.2 39.1,0.6 40.8,2.2 42.5,0.6 44.2,2.2 45.9,0.6 47.6,2.2 49.3,0.6 51.0,2.2 52.7,0.6 54.4,2.2 56.1,0.6 57.8,2.2 59.5,0.6 61.2,2.2 62.9,0.6 64.6,2.2 66.3,0.6 68.0,2.2 69.7,0.6 71.4,2.2 73.1,0.6 74.8,2.2 76.5,0.6 78.2,2.2 79.9,0.6 81.6,2.2 83.3,0.6 85.0,2.2 86.7,0.6 88.4,2.2 90.1,0.6 91.8,2.2 93.5,0.6 95.2,2.2 96.9,0.6 98.6,2.2 100.3,0.6 102.0,2.2 103.7,0.6 105.4,2.2 107.1,0.6 108.8,2.2 110.5,0.6 112.2,2.2 113.9,0.6 115.6,2.2 117.3,0.6 119.0,2.2 120.7,0.6 122.4,2.2 124.1,0.6 125.8,2.2 127.5,0.6 129.2,2.2 130.9,0.6 132.6,2.2 134.3,0.6 136.0,2.2 137.7,0.6 139.4,2.2 141.1,0.6 142.8,2.2 144.5,0.6 146.2,2.2 147.9,0.6 149.6,2.2"/></svg>
<svg class="sq" style="left:326.41px;top:657.40px" width="33.7" height="4" viewBox="0 0 33.7 4"><polyline points="0.0,2.2 1.7,0.6 3.4,2.2 5.1,0.6 6.8,2.2 8.5,0.6 10.2,2.2 11.9,0.6 13.6,2.2 15.3,0.6 17.0,2.2 18.7,0.6 20.4,2.2 22.1,0.6 23.8,2.2 25.5,0.6 27.2,2.2 28.9,0.6 30.6,2.2 32.3,0.6"/></svg>
<svg class="sq" style="left:424.42px;top:689.69px" width="360.4" height="4" viewBox="0 0 360.4 4"><polyline points="0.0,2.2 1.7,0.6 3.4,2.2 5.1,0.6 6.8,2.2 8.5,0.6 10.2,2.2 11.9,0.6 13.6,2.2 15.3,0.6 17.0,2.2 18.7,0.6 20.4,2.2 22.1,0.6 23.8,2.2 25.5,0.6 27.2,2.2 28.9,0.6 30.6,2.2 32.3,0.6 34.0,2.2 35.7,0.6 37.4,2.2 39.1,0.6 40.8,2.2 42.5,0.6 44.2,2.2 45.9,0.6 47.6,2.2 49.3,0.6 51.0,2.2 52.7,0.6 54.4,2.2 56.1,0.6 57.8,2.2 59.5,0.6 61.2,2.2 62.9,0.6 64.6,2.2 66.3,0.6 68.0,2.2 69.7,0.6 71.4,2.2 73.1,0.6 74.8,2.2 76.5,0.6 78.2,2.2 79.9,0.6 81.6,2.2 83.3,0.6 85.0,2.2 86.7,0.6 88.4,2.2 90.1,0.6 91.8,2.2 93.5,0.6 95.2,2.2 96.9,0.6 98.6,2.2 100.3,0.6 102.0,2.2 103.7,0.6 105.4,2.2 107.1,0.6 108.8,2.2 110.5,0.6 112.2,2.2 113.9,0.6 115.6,2.2 117.3,0.6 119.0,2.2 120.7,0.6 122.4,2.2 124.1,0.6 125.8,2.2 127.5,0.6 129.2,2.2 130.9,0.6 132.6,2.2 134.3,0.6 136.0,2.2 137.7,0.6 139.4,2.2 141.1,0.6 142.8,2.2 144.5,0.6 146.2,2.2 147.9,0.6 149.6,2.2 151.3,0.6 153.0,2.2 154.7,0.6 156.4,2.2 158.1,0.6 159.8,2.2 161.5,0.6 163.2,2.2 164.9,0.6 166.6,2.2 168.3,0.6 170.0,2.2 171.7,0.6 173.4,2.2 175.1,0.6 176.8,2.2 178.5,0.6 180.2,2.2 181.9,0.6 183.6,2.2 185.3,0.6 187.0,2.2 188.7,0.6 190.4,2.2 192.1,0.6 193.8,2.2 195.5,0.6 197.2,2.2 198.9,0.6 200.6,2.2 202.3,0.6 204.0,2.2 205.7,0.6 207.4,2.2 209.1,0.6 210.8,2.2 212.5,0.6 214.2,2.2 215.9,0.6 217.6,2.2 219.3,0.6 221.0,2.2 222.7,0.6 224.4,2.2 226.1,0.6 227.8,2.2 229.5,0.6 231.2,2.2 232.9,0.6 234.6,2.2 236.3,0.6 238.0,2.2 239.7,0.6 241.4,2.2 243.1,0.6 244.8,2.2 246.5,0.6 248.2,2.2 249.9,0.6 251.6,2.2 253.3,0.6 255.0,2.2 256.7,0.6 258.4,2.2 260.1,0.6 261.8,2.2 263.5,0.6 265.2,2.2 266.9,0.6 268.6,2.2 270.3,0.6 272.0,2.2 273.7,0.6 275.4,2.2 277.1,0.6 278.8,2.2 280.5,0.6 282.2,2.2 283.9,0.6 285.6,2.2 287.3,0.6 289.0,2.2 290.7,0.6 292.4,2.2 294.1,0.6 295.8,2.2 297.5,0.6 299.2,2.2 300.9,0.6 302.6,2.2 304.3,0.6 306.0,2.2 307.7,0.6 309.4,2.2 311.1,0.6 312.8,2.2 314.5,0.6 316.2,2.2 317.9,0.6 319.6,2.2 321.3,0.6 323.0,2.2 324.7,0.6 326.4,2.2 328.1,0.6 329.8,2.2 331.5,0.6 333.2,2.2 334.9,0.6 336.6,2.2 338.3,0.6 340.0,2.2 341.7,0.6 343.4,2.2 345.1,0.6 346.8,2.2 348.5,0.6 350.2,2.2 351.9,0.6 353.6,2.2 355.3,0.6 357.0,2.2 358.7,0.6"/></svg>
<div id="cursor" style="left:1098.6px"></div>
<div id="mm"><i style="left:1463.0px;top:74.0px;width:6px;background:#a87258"></i><i style="left:1463.0px;top:75.7px;width:8px;background:#a87258"></i><i style="left:1486.5px;top:75.7px;width:6px;background:#8c6450"></i><i style="left:1463.0px;top:77.4px;width:7px;background:#a87258"></i><i style="left:1486.5px;top:77.4px;width:6px;background:#8c6450"></i><i style="left:1463.0px;top:79.1px;width:7px;background:#a87258"></i><i style="left:1486.5px;top:79.1px;width:6px;background:#8c6450"></i><i style="left:1463.0px;top:80.8px;width:6px;background:#a87258"></i><i style="left:1463.0px;top:82.5px;width:8px;background:#a87258"></i><i style="left:1486.5px;top:82.5px;width:6px;background:#8c6450"></i><i style="left:1463.0px;top:84.2px;width:8px;background:#a87258"></i><i style="left:1486.5px;top:84.2px;width:6px;background:#8c6450"></i><i style="left:1463.0px;top:85.9px;width:8px;background:#a87258"></i><i style="left:1486.5px;top:85.9px;width:6px;background:#8c6450"></i><i style="left:1463.0px;top:87.6px;width:8px;background:#a87258"></i><i style="left:1486.5px;top:87.6px;width:6px;background:#8c6450"></i><i style="left:1463.0px;top:89.3px;width:10px;background:#a87258"></i><i style="left:1486.5px;top:89.3px;width:6px;background:#8c6450"></i><i style="left:1463.0px;top:91.0px;width:8px;background:#a87258"></i><i style="left:1486.5px;top:91.0px;width:6px;background:#8c6450"></i><i style="left:1463.0px;top:92.7px;width:10px;background:#a87258"></i><i style="left:1463.0px;top:94.4px;width:10px;background:#a87258"></i><i style="left:1486.5px;top:94.4px;width:6px;background:#8c6450"></i><i style="left:1463.0px;top:96.1px;width:6px;background:#a87258"></i><i style="left:1463.0px;top:97.8px;width:6px;background:#a87258"></i><i style="left:1486.5px;top:97.8px;width:6px;background:#8c6450"></i><i style="left:1463.0px;top:99.5px;width:7px;background:#a87258"></i><i style="left:1486.5px;top:99.5px;width:6px;background:#8c6450"></i><i style="left:1463.0px;top:101.2px;width:7px;background:#a87258"></i><i style="left:1486.5px;top:101.2px;width:6px;background:#8c6450"></i><i style="left:1463.0px;top:102.9px;width:10px;background:#a87258"></i><i style="left:1486.5px;top:102.9px;width:6px;background:#8c6450"></i><i style="left:1463.0px;top:104.6px;width:7px;background:#a87258"></i><i style="left:1486.5px;top:104.6px;width:6px;background:#8c6450"></i><i style="left:1463.0px;top:106.3px;width:10px;background:#a87258"></i><i style="left:1486.5px;top:106.3px;width:6px;background:#8c6450"></i><i style="left:1463.0px;top:108.0px;width:8px;background:#a87258"></i><i style="left:1486.5px;top:108.0px;width:6px;background:#8c6450"></i><i style="left:1463.0px;top:109.7px;width:7px;background:#a87258"></i><i style="left:1486.5px;top:109.7px;width:6px;background:#8c6450"></i><i style="left:1463.0px;top:111.4px;width:10px;background:#a87258"></i><i style="left:1486.5px;top:111.4px;width:6px;background:#8c6450"></i><i style="left:1463.0px;top:113.1px;width:8px;background:#a87258"></i><i style="left:1486.5px;top:113.1px;width:6px;background:#8c6450"></i><i style="left:1463.0px;top:114.8px;width:7px;background:#a87258"></i><i style="left:1486.5px;top:114.8px;width:6px;background:#8c6450"></i><i style="left:1463.0px;top:116.5px;width:6px;background:#a87258"></i><i style="left:1486.5px;top:116.5px;width:6px;background:#8c6450"></i><i style="left:1463.0px;top:118.2px;width:7px;background:#a87258"></i><i style="left:1486.5px;top:118.2px;width:6px;background:#8c6450"></i><i style="left:1463.0px;top:119.9px;width:8px;background:#a87258"></i><i style="left:1486.5px;top:119.9px;width:6px;background:#8c6450"></i><i style="left:1463.0px;top:121.6px;width:8px;background:#a87258"></i><i style="left:1486.5px;top:121.6px;width:6px;background:#8c6450"></i><i style="left:1463.0px;top:123.3px;width:7px;background:#a87258"></i><i style="left:1486.5px;top:123.3px;width:6px;background:#8c6450"></i><i style="left:1463.0px;top:125.0px;width:6px;background:#a87258"></i><i style="left:1486.5px;top:125.0px;width:6px;background:#8c6450"></i><i style="left:1463.0px;top:126.7px;width:7px;background:#a87258"></i><i style="left:1486.5px;top:126.7px;width:6px;background:#8c6450"></i><i style="left:1463.0px;top:128.4px;width:7px;background:#a87258"></i><i style="left:1486.5px;top:128.4px;width:6px;background:#8c6450"></i><i style="left:1463.0px;top:130.1px;width:8px;background:#a87258"></i><i style="left:1486.5px;top:130.1px;width:6px;background:#8c6450"></i><i style="left:1463.0px;top:131.8px;width:6px;background:#a87258"></i><i style="left:1486.5px;top:131.8px;width:6px;background:#8c6450"></i><i style="left:1463.0px;top:133.5px;width:7px;background:#a87258"></i><i style="left:1486.5px;top:133.5px;width:6px;background:#8c6450"></i><i style="left:1463.0px;top:135.2px;width:7px;background:#a87258"></i><i style="left:1486.5px;top:135.2px;width:6px;background:#8c6450"></i><i style="left:1463.0px;top:136.9px;width:7px;background:#a87258"></i><i style="left:1486.5px;top:136.9px;width:6px;background:#8c6450"></i><i style="left:1463.0px;top:138.6px;width:6px;background:#a87258"></i><i style="left:1486.5px;top:138.6px;width:6px;background:#8c6450"></i><i style="left:1463.0px;top:140.3px;width:6px;background:#a87258"></i><i style="left:1486.5px;top:140.3px;width:6px;background:#8c6450"></i><i style="left:1463.0px;top:142.0px;width:10px;background:#a87258"></i><i style="left:1486.5px;top:142.0px;width:6px;background:#8c6450"></i><i style="left:1463.0px;top:143.7px;width:7px;background:#a87258"></i><i style="left:1486.5px;top:143.7px;width:6px;background:#8c6450"></i><i style="left:1463.0px;top:145.4px;width:7px;background:#a87258"></i><i style="left:1486.5px;top:145.4px;width:6px;background:#8c6450"></i><i style="left:1466.4px;top:147.1px;width:7.0px;background:#6f8796"></i><i style="left:1474.4px;top:147.1px;width:4.0px;background:#5f86a0"></i><i style="left:1479.4px;top:147.1px;width:2.0px;background:#6a5a78"></i><i style="left:1482.4px;top:147.1px;width:3.0px;background:#6f8796"></i><i style="left:1485.4px;top:147.1px;width:5.0px;background:#3f6f9c"></i><i style="left:1490.4px;top:147.1px;width:1.6px;background:#3f6f9c"></i><i style="left:1463.0px;top:148.8px;width:5.0px;background:#5f86a0"></i><i style="left:1470.0px;top:148.8px;width:4.0px;background:#3f6f9c"></i><i style="left:1475.0px;top:148.8px;width:6.0px;background:#86604a"></i><i style="left:1482.0px;top:148.8px;width:2.0px;background:#5f86a0"></i><i style="left:1466.4px;top:150.5px;width:3.0px;background:#3f6f9c"></i><i style="left:1470.4px;top:150.5px;width:6.0px;background:#3f6f9c"></i><i style="left:1477.4px;top:150.5px;width:4.0px;background:#3f6f9c"></i><i style="left:1481.4px;top:150.5px;width:5.0px;background:#4f6a45"></i><i style="left:1487.4px;top:150.5px;width:4.6px;background:#6f8796"></i><i style="left:1466.4px;top:152.2px;width:7.0px;background:#3f6f9c"></i><i style="left:1474.4px;top:152.2px;width:7.0px;background:#4f6a45"></i><i style="left:1482.4px;top:152.2px;width:5.0px;background:#5f86a0"></i><i style="left:1466.4px;top:155.6px;width:2.0px;background:#6a5a78"></i><i style="left:1466.4px;top:159.0px;width:6.0px;background:#4a7fae"></i><i style="left:1473.4px;top:159.0px;width:6.0px;background:#3f6f9c"></i><i style="left:1479.4px;top:159.0px;width:3.0px;background:#6f8796"></i><i style="left:1483.4px;top:159.0px;width:3.0px;background:#86604a"></i><i style="left:1487.4px;top:159.0px;width:4.6px;background:#3f6f9c"></i><i style="left:1466.4px;top:162.4px;width:4.0px;background:#4a7fae"></i><i style="left:1470.4px;top:162.4px;width:2.0px;background:#3f6f9c"></i><i style="left:1473.4px;top:162.4px;width:5.0px;background:#3f6f9c"></i><i style="left:1480.4px;top:162.4px;width:2.0px;background:#5a5a5a"></i><i style="left:1484.4px;top:162.4px;width:2.0px;background:#3f6f9c"></i><i style="left:1466.4px;top:164.1px;width:2.0px;background:#86604a"></i><i style="left:1470.4px;top:164.1px;width:4.0px;background:#3f6f9c"></i><i style="left:1475.4px;top:164.1px;width:3.0px;background:#4f6a45"></i><i style="left:1480.4px;top:164.1px;width:1.0px;background:#3f6f9c"></i><i style="left:1466.4px;top:165.8px;width:5.0px;background:#5a5a5a"></i><i style="left:1471.4px;top:165.8px;width:6.0px;background:#6a5a78"></i><i style="left:1466.4px;top:167.5px;width:3.0px;background:#6f8796"></i><i style="left:1470.4px;top:167.5px;width:5.0px;background:#3f6f9c"></i><i style="left:1476.4px;top:167.5px;width:2.0px;background:#5a5a5a"></i><i style="left:1478.4px;top:167.5px;width:2.0px;background:#6a5a78"></i><i style="left:1463.0px;top:169.2px;width:6.0px;background:#3f6f9c"></i><i style="left:1470.0px;top:169.2px;width:7.0px;background:#3f6f9c"></i><i style="left:1477.0px;top:169.2px;width:7.0px;background:#4a7fae"></i><i style="left:1485.0px;top:169.2px;width:7.0px;background:#5a5a5a"></i><i style="left:1463.0px;top:170.9px;width:2.0px;background:#5f86a0"></i><i style="left:1466.0px;top:170.9px;width:5.0px;background:#4a7fae"></i><i style="left:1471.0px;top:170.9px;width:3.0px;background:#3f6f9c"></i><i style="left:1474.0px;top:170.9px;width:3.0px;background:#6f8796"></i><i style="left:1478.0px;top:170.9px;width:7.0px;background:#3f6f9c"></i><i style="left:1487.0px;top:170.9px;width:5.0px;background:#6a5a78"></i><i style="left:1466.4px;top:172.6px;width:2.0px;background:#4a7fae"></i><i style="left:1466.4px;top:174.3px;width:3.0px;background:#5a5a5a"></i><i style="left:1469.4px;top:174.3px;width:4.0px;background:#5a5a5a"></i><i style="left:1474.4px;top:174.3px;width:6.0px;background:#5a5a5a"></i><i style="left:1482.4px;top:174.3px;width:4.0px;background:#86604a"></i><i style="left:1488.4px;top:174.3px;width:3.6px;background:#3f6f9c"></i><i style="left:1466.4px;top:176.0px;width:6.0px;background:#4f6a45"></i><i style="left:1473.4px;top:176.0px;width:6.0px;background:#3f6f9c"></i><i style="left:1481.4px;top:176.0px;width:3.0px;background:#4f6a45"></i><i style="left:1486.4px;top:176.0px;width:2.0px;background:#6a5a78"></i><i style="left:1488.4px;top:176.0px;width:3.6px;background:#3f6f9c"></i><i style="left:1469.8px;top:177.7px;width:6.0px;background:#3f6f9c"></i><i style="left:1476.8px;top:177.7px;width:7.0px;background:#4f6a45"></i><i style="left:1485.8px;top:177.7px;width:6.0px;background:#6a5a78"></i><i style="left:1491.8px;top:177.7px;width:0.2px;background:#3f6f9c"></i><i style="left:1473.2px;top:179.4px;width:5.0px;background:#4f6a45"></i><i style="left:1478.2px;top:179.4px;width:2.0px;background:#6a5a78"></i><i style="left:1481.2px;top:179.4px;width:6.0px;background:#4f6a45"></i><i style="left:1489.2px;top:179.4px;width:2.8px;background:#5a5a5a"></i><i style="left:1469.8px;top:181.1px;width:3.0px;background:#4f6a45"></i><i style="left:1473.8px;top:181.1px;width:6.0px;background:#5a5a5a"></i><i style="left:1480.8px;top:181.1px;width:3.0px;background:#5f86a0"></i><i style="left:1483.8px;top:181.1px;width:5.0px;background:#6a5a78"></i><i style="left:1489.8px;top:181.1px;width:2.0px;background:#5a5a5a"></i><i style="left:1469.8px;top:184.5px;width:7.0px;background:#3f6f9c"></i><i style="left:1476.8px;top:184.5px;width:3.0px;background:#3f6f9c"></i><i style="left:1473.2px;top:186.2px;width:3.0px;background:#5a5a5a"></i><i style="left:1476.2px;top:186.2px;width:7.0px;background:#5f86a0"></i><i style="left:1485.2px;top:186.2px;width:5.0px;background:#3f6f9c"></i><i style="left:1476.6px;top:187.9px;width:2.0px;background:#3f6f9c"></i><i style="left:1480.6px;top:187.9px;width:5.0px;background:#6a5a78"></i><i style="left:1485.6px;top:187.9px;width:5.0px;background:#3f6f9c"></i><i style="left:1476.6px;top:189.6px;width:2.0px;background:#4a7fae"></i><i style="left:1480.0px;top:191.3px;width:4.0px;background:#3f6f9c"></i><i style="left:1485.0px;top:191.3px;width:7.0px;background:#86604a"></i><i style="left:1476.6px;top:193.0px;width:4.0px;background:#4a7fae"></i><i style="left:1481.6px;top:193.0px;width:2.0px;background:#3f6f9c"></i><i style="left:1484.6px;top:193.0px;width:2.0px;background:#86604a"></i><i style="left:1486.6px;top:193.0px;width:5.4px;background:#4a7fae"></i><i style="left:1476.6px;top:194.7px;width:2.0px;background:#6a5a78"></i><i style="left:1478.6px;top:194.7px;width:4.0px;background:#4f6a45"></i><i style="left:1483.6px;top:194.7px;width:4.0px;background:#6f8796"></i><i style="left:1487.6px;top:194.7px;width:2.0px;background:#4f6a45"></i><i style="left:1489.6px;top:194.7px;width:2.0px;background:#3f6f9c"></i><i style="left:1480.0px;top:198.1px;width:3.0px;background:#86604a"></i><i style="left:1484.0px;top:198.1px;width:6.0px;background:#3f6f9c"></i><i style="left:1491.0px;top:198.1px;width:1.0px;background:#3f6f9c"></i><i style="left:1480.0px;top:203.2px;width:5.0px;background:#4a7fae"></i><i style="left:1486.0px;top:203.2px;width:6.0px;background:#6a5a78"></i><i style="left:1480.0px;top:204.9px;width:3.0px;background:#3f6f9c"></i><i style="left:1483.0px;top:204.9px;width:7.0px;background:#3f6f9c"></i><i style="left:1491.0px;top:204.9px;width:1.0px;background:#3f6f9c"></i><i style="left:1480.0px;top:208.3px;width:2.0px;background:#5f86a0"></i><i style="left:1484.0px;top:208.3px;width:7.0px;background:#86604a"></i><i style="left:1480.0px;top:210.0px;width:4.0px;background:#6a5a78"></i><i style="left:1484.0px;top:210.0px;width:4.0px;background:#3f6f9c"></i><i style="left:1489.0px;top:210.0px;width:3.0px;background:#3f6f9c"></i><i style="left:1480.0px;top:213.4px;width:4.0px;background:#5f86a0"></i><i style="left:1484.0px;top:213.4px;width:5.0px;background:#86604a"></i><i style="left:1491.0px;top:213.4px;width:1.0px;background:#5a5a5a"></i><i style="left:1480.0px;top:215.1px;width:2.0px;background:#3f6f9c"></i><i style="left:1483.0px;top:215.1px;width:6.0px;background:#3f6f9c"></i><i style="left:1490.0px;top:215.1px;width:2.0px;background:#86604a"></i><i style="left:1480.0px;top:216.8px;width:3.0px;background:#6f8796"></i><i style="left:1484.0px;top:216.8px;width:4.0px;background:#6a5a78"></i><i style="left:1488.0px;top:216.8px;width:4.0px;background:#6f8796"></i><i style="left:1480.0px;top:220.2px;width:6.0px;background:#3f6f9c"></i><i style="left:1488.0px;top:220.2px;width:4.0px;background:#6f8796"></i><i style="left:1480.0px;top:221.9px;width:2.0px;background:#3f6f9c"></i><i style="left:1483.0px;top:221.9px;width:2.0px;background:#5f86a0"></i><i style="left:1486.0px;top:221.9px;width:6.0px;background:#3f6f9c"></i><i style="left:1480.0px;top:223.6px;width:5.0px;background:#4a7fae"></i><i style="left:1487.0px;top:223.6px;width:5.0px;background:#4a7fae"></i><i style="left:1480.0px;top:227.0px;width:2.0px;background:#5a5a5a"></i><i style="left:1476.6px;top:228.7px;width:5.0px;background:#4a7fae"></i><i style="left:1482.6px;top:228.7px;width:7.0px;background:#86604a"></i><i style="left:1489.6px;top:228.7px;width:2.4px;background:#5a5a5a"></i><i style="left:1480.0px;top:230.4px;width:4.0px;background:#6f8796"></i><i style="left:1486.0px;top:230.4px;width:3.0px;background:#3f6f9c"></i><i style="left:1490.0px;top:230.4px;width:2.0px;background:#6a5a78"></i><i style="left:1480.0px;top:232.1px;width:5.0px;background:#86604a"></i><i style="left:1487.0px;top:232.1px;width:4.0px;background:#6a5a78"></i><i style="left:1476.6px;top:233.8px;width:3.0px;background:#86604a"></i><i style="left:1479.6px;top:233.8px;width:5.0px;background:#3f6f9c"></i><i style="left:1485.6px;top:233.8px;width:5.0px;background:#4a7fae"></i><i style="left:1476.6px;top:235.5px;width:3.0px;background:#5a5a5a"></i><i style="left:1479.6px;top:235.5px;width:6.0px;background:#4a7fae"></i><i style="left:1485.6px;top:235.5px;width:6.4px;background:#4f6a45"></i><i style="left:1476.6px;top:237.2px;width:6.0px;background:#86604a"></i><i style="left:1482.6px;top:237.2px;width:7.0px;background:#3f6f9c"></i><i style="left:1489.6px;top:237.2px;width:2.4px;background:#6a5a78"></i><i style="left:1473.2px;top:242.3px;width:3.0px;background:#5f86a0"></i><i style="left:1477.2px;top:242.3px;width:5.0px;background:#3f6f9c"></i><i style="left:1482.2px;top:242.3px;width:4.0px;background:#3f6f9c"></i><i style="left:1487.2px;top:242.3px;width:4.0px;background:#5f86a0"></i><i style="left:1491.2px;top:242.3px;width:0.8px;background:#3f6f9c"></i><i style="left:1476.6px;top:244.0px;width:6.0px;background:#4a7fae"></i><i style="left:1483.6px;top:244.0px;width:5.0px;background:#86604a"></i><i style="left:1488.6px;top:244.0px;width:3.4px;background:#4a7fae"></i><i style="left:1476.6px;top:245.7px;width:3.0px;background:#86604a"></i><i style="left:1480.6px;top:245.7px;width:6.0px;background:#3f6f9c"></i><i style="left:1486.6px;top:245.7px;width:4.0px;background:#5f86a0"></i><i style="left:1490.6px;top:245.7px;width:1.4px;background:#5f86a0"></i><i style="left:1476.6px;top:247.4px;width:5.0px;background:#6a5a78"></i><i style="left:1476.6px;top:249.1px;width:6.0px;background:#3f6f9c"></i><i style="left:1482.6px;top:249.1px;width:5.0px;background:#5f86a0"></i><i style="left:1488.6px;top:249.1px;width:3.0px;background:#86604a"></i><i style="left:1476.6px;top:250.8px;width:3.0px;background:#86604a"></i><i style="left:1480.6px;top:250.8px;width:6.0px;background:#5f86a0"></i><i style="left:1486.6px;top:250.8px;width:3.0px;background:#3f6f9c"></i><i style="left:1489.6px;top:250.8px;width:1.0px;background:#4f6a45"></i><i style="left:1476.6px;top:252.5px;width:5.0px;background:#5f86a0"></i><i style="left:1481.6px;top:252.5px;width:6.0px;background:#5a5a5a"></i><i style="left:1487.6px;top:252.5px;width:2.0px;background:#3f6f9c"></i><i style="left:1490.6px;top:252.5px;width:1.4px;background:#4a7fae"></i><i style="left:1480.0px;top:254.2px;width:2.0px;background:#5f86a0"></i><i style="left:1483.0px;top:254.2px;width:5.0px;background:#4f6a45"></i><i style="left:1488.0px;top:254.2px;width:4.0px;background:#86604a"></i><i style="left:1480.0px;top:255.9px;width:4.0px;background:#3f6f9c"></i><i style="left:1486.0px;top:255.9px;width:6.0px;background:#5a5a5a"></i><i style="left:1476.6px;top:257.6px;width:5.0px;background:#5f86a0"></i><i style="left:1482.6px;top:257.6px;width:2.0px;background:#3f6f9c"></i><i style="left:1484.6px;top:257.6px;width:5.0px;background:#6a5a78"></i><i style="left:1491.6px;top:257.6px;width:0.4px;background:#3f6f9c"></i><i style="left:1473.2px;top:259.3px;width:5.0px;background:#5a5a5a"></i><i style="left:1478.2px;top:259.3px;width:3.0px;background:#3f6f9c"></i><i style="left:1481.2px;top:259.3px;width:6.0px;background:#4a7fae"></i><i style="left:1488.2px;top:259.3px;width:2.0px;background:#4f6a45"></i><i style="left:1490.2px;top:259.3px;width:1.8px;background:#3f6f9c"></i><i style="left:1473.2px;top:261.0px;width:7.0px;background:#86604a"></i><i style="left:1482.2px;top:261.0px;width:6.0px;background:#5f86a0"></i><i style="left:1469.8px;top:264.4px;width:3.0px;background:#6f8796"></i><i style="left:1472.8px;top:264.4px;width:2.0px;background:#4f6a45"></i><i style="left:1475.8px;top:264.4px;width:5.0px;background:#86604a"></i><i style="left:1469.8px;top:266.1px;width:6.0px;background:#5a5a5a"></i><i style="left:1475.8px;top:266.1px;width:5.0px;background:#86604a"></i><i style="left:1480.8px;top:266.1px;width:2.0px;background:#5a5a5a"></i><i style="left:1483.8px;top:266.1px;width:7.0px;background:#5f86a0"></i><i style="left:1473.2px;top:267.8px;width:2.0px;background:#3f6f9c"></i><i style="left:1476.2px;top:267.8px;width:4.0px;background:#5f86a0"></i><i style="left:1480.2px;top:267.8px;width:2.0px;background:#86604a"></i><i style="left:1484.2px;top:267.8px;width:2.0px;background:#5a5a5a"></i><i style="left:1487.2px;top:267.8px;width:3.0px;background:#86604a"></i><i style="left:1476.6px;top:269.5px;width:4.0px;background:#4a7fae"></i><i style="left:1482.6px;top:269.5px;width:5.0px;background:#6f8796"></i><i style="left:1487.6px;top:269.5px;width:3.0px;background:#6a5a78"></i><i style="left:1491.6px;top:269.5px;width:0.4px;background:#3f6f9c"></i><i style="left:1480.0px;top:271.2px;width:6.0px;background:#3f6f9c"></i><i style="left:1487.0px;top:271.2px;width:2.0px;background:#3f6f9c"></i><i style="left:1489.0px;top:271.2px;width:3.0px;background:#6a5a78"></i><i style="left:1480.0px;top:272.9px;width:3.0px;background:#4f6a45"></i><i style="left:1484.0px;top:272.9px;width:2.0px;background:#86604a"></i><i style="left:1487.0px;top:272.9px;width:4.0px;background:#3f6f9c"></i><i style="left:1476.6px;top:274.6px;width:4.0px;background:#5f86a0"></i><i style="left:1480.6px;top:274.6px;width:6.0px;background:#5a5a5a"></i><i style="left:1487.6px;top:274.6px;width:4.0px;background:#86604a"></i><i style="left:1476.6px;top:278.0px;width:5.0px;background:#5a5a5a"></i><i style="left:1482.6px;top:278.0px;width:4.0px;background:#6a5a78"></i><i style="left:1486.6px;top:278.0px;width:5.4px;background:#5f86a0"></i><i style="left:1476.6px;top:279.7px;width:5.0px;background:#4a7fae"></i><i style="left:1481.6px;top:279.7px;width:2.0px;background:#5a5a5a"></i><i style="left:1476.6px;top:281.4px;width:6.0px;background:#3f6f9c"></i><i style="left:1483.6px;top:281.4px;width:7.0px;background:#3f6f9c"></i><i style="left:1491.6px;top:281.4px;width:0.4px;background:#3f6f9c"></i><i style="left:1476.6px;top:283.1px;width:2.0px;background:#4a7fae"></i><i style="left:1476.6px;top:284.8px;width:4.0px;background:#5f86a0"></i><i style="left:1481.6px;top:284.8px;width:3.0px;background:#6a5a78"></i><i style="left:1484.6px;top:284.8px;width:2.0px;background:#86604a"></i><i style="left:1486.6px;top:284.8px;width:5.4px;background:#5a5a5a"></i><i style="left:1476.6px;top:286.5px;width:6.0px;background:#4a7fae"></i><i style="left:1484.6px;top:286.5px;width:3.0px;background:#5f86a0"></i><i style="left:1487.6px;top:286.5px;width:3.0px;background:#5f86a0"></i><i style="left:1490.6px;top:286.5px;width:1.4px;background:#3f6f9c"></i><i style="left:1476.6px;top:288.2px;width:2.0px;background:#4a7fae"></i><i style="left:1479.6px;top:288.2px;width:6.0px;background:#4a7fae"></i><i style="left:1485.6px;top:288.2px;width:2.0px;background:#5f86a0"></i><i style="left:1488.6px;top:288.2px;width:3.4px;background:#6a5a78"></i><i style="left:1480.0px;top:289.9px;width:7.0px;background:#5a5a5a"></i><i style="left:1489.0px;top:289.9px;width:3.0px;background:#4a7fae"></i><i style="left:1476.6px;top:291.6px;width:4.0px;background:#5a5a5a"></i><i style="left:1481.6px;top:291.6px;width:3.0px;background:#3f6f9c"></i><i style="left:1484.6px;top:291.6px;width:3.0px;background:#3f6f9c"></i><i style="left:1488.6px;top:291.6px;width:3.4px;background:#5a5a5a"></i><i style="left:1473.2px;top:293.3px;width:7.0px;background:#4a7fae"></i><i style="left:1481.2px;top:293.3px;width:2.0px;background:#4a7fae"></i><i style="left:1483.2px;top:293.3px;width:5.0px;background:#5a5a5a"></i><i style="left:1489.2px;top:293.3px;width:2.8px;background:#3f6f9c"></i><i style="left:1476.6px;top:296.7px;width:2.0px;background:#3f6f9c"></i><i style="left:1480.6px;top:296.7px;width:3.0px;background:#6a5a78"></i><i style="left:1485.6px;top:296.7px;width:4.0px;background:#3f6f9c"></i><i style="left:1489.6px;top:296.7px;width:2.4px;background:#6f8796"></i><i style="left:1480.0px;top:298.4px;width:3.0px;background:#86604a"></i><i style="left:1483.0px;top:298.4px;width:6.0px;background:#5a5a5a"></i><i style="left:1489.0px;top:298.4px;width:3.0px;background:#5f86a0"></i><i style="left:1476.6px;top:300.1px;width:5.0px;background:#4f6a45"></i><i style="left:1482.6px;top:300.1px;width:2.0px;background:#5f86a0"></i><i style="left:1484.6px;top:300.1px;width:5.0px;background:#4f6a45"></i><i style="left:1489.6px;top:300.1px;width:2.4px;background:#4f6a45"></i><i style="left:1476.6px;top:301.8px;width:4.0px;background:#86604a"></i><i style="left:1481.6px;top:301.8px;width:2.0px;background:#86604a"></i><i style="left:1485.6px;top:301.8px;width:4.0px;background:#5f86a0"></i><i style="left:1490.6px;top:301.8px;width:1.4px;background:#3f6f9c"></i><i style="left:1473.2px;top:303.5px;width:5.0px;background:#3f6f9c"></i><i style="left:1479.2px;top:303.5px;width:2.0px;background:#4a7fae"></i><i style="left:1482.2px;top:303.5px;width:6.0px;background:#3f6f9c"></i><i style="left:1489.2px;top:303.5px;width:2.8px;background:#3f6f9c"></i><i style="left:1476.6px;top:306.9px;width:6.0px;background:#3f6f9c"></i><i style="left:1484.6px;top:306.9px;width:3.0px;background:#3f6f9c"></i><i style="left:1488.6px;top:306.9px;width:3.4px;background:#3f6f9c"></i><i style="left:1476.6px;top:308.6px;width:3.0px;background:#86604a"></i><i style="left:1479.6px;top:308.6px;width:2.0px;background:#6a5a78"></i><i style="left:1482.6px;top:308.6px;width:2.0px;background:#6f8796"></i><i style="left:1485.6px;top:308.6px;width:2.0px;background:#6f8796"></i><i style="left:1487.6px;top:308.6px;width:4.4px;background:#5a5a5a"></i><i style="left:1473.2px;top:310.3px;width:3.0px;background:#3f6f9c"></i><i style="left:1477.2px;top:310.3px;width:6.0px;background:#3f6f9c"></i><i style="left:1484.2px;top:310.3px;width:4.0px;background:#4a7fae"></i><i style="left:1488.2px;top:310.3px;width:3.0px;background:#5a5a5a"></i><i style="left:1491.2px;top:310.3px;width:0.8px;background:#3f6f9c"></i><i style="left:1469.8px;top:312.0px;width:4.0px;background:#5f86a0"></i><i style="left:1474.8px;top:312.0px;width:6.0px;background:#5a5a5a"></i><i style="left:1481.8px;top:312.0px;width:5.0px;background:#3f6f9c"></i><i style="left:1487.8px;top:312.0px;width:4.2px;background:#6a5a78"></i><i style="left:1469.8px;top:315.4px;width:6.0px;background:#6a5a78"></i><i style="left:1475.8px;top:315.4px;width:5.0px;background:#5f86a0"></i><i style="left:1480.8px;top:315.4px;width:2.0px;background:#3f6f9c"></i><i style="left:1483.8px;top:315.4px;width:5.0px;background:#3f6f9c"></i><i style="left:1488.8px;top:315.4px;width:3.2px;background:#4f6a45"></i><i style="left:1469.8px;top:317.1px;width:7.0px;background:#3f6f9c"></i><i style="left:1478.8px;top:317.1px;width:2.0px;background:#3f6f9c"></i><i style="left:1482.8px;top:317.1px;width:5.0px;background:#3f6f9c"></i><i style="left:1487.8px;top:317.1px;width:2.0px;background:#6f8796"></i><i style="left:1489.8px;top:317.1px;width:2.2px;background:#3f6f9c"></i><i style="left:1473.2px;top:318.8px;width:7.0px;background:#5a5a5a"></i><i style="left:1480.2px;top:318.8px;width:4.0px;background:#6f8796"></i><i style="left:1476.6px;top:320.5px;width:5.0px;background:#3f6f9c"></i><i style="left:1482.6px;top:320.5px;width:6.0px;background:#6a5a78"></i><i style="left:1488.6px;top:320.5px;width:2.0px;background:#86604a"></i><i style="left:1476.6px;top:322.2px;width:2.0px;background:#5f86a0"></i><i style="left:1476.6px;top:323.9px;width:5.0px;background:#3f6f9c"></i><i style="left:1482.6px;top:323.9px;width:2.0px;background:#4f6a45"></i><i style="left:1484.6px;top:323.9px;width:7.0px;background:#3f6f9c"></i><i style="left:1476.6px;top:325.6px;width:6.0px;background:#5f86a0"></i><i style="left:1483.6px;top:325.6px;width:2.0px;background:#5f86a0"></i><i style="left:1476.6px;top:327.3px;width:5.0px;background:#5a5a5a"></i><i style="left:1481.6px;top:327.3px;width:6.0px;background:#3f6f9c"></i><i style="left:1488.6px;top:327.3px;width:3.4px;background:#86604a"></i><i style="left:1476.6px;top:329.0px;width:4.0px;background:#3f6f9c"></i><i style="left:1480.6px;top:329.0px;width:3.0px;background:#3f6f9c"></i><i style="left:1484.6px;top:329.0px;width:6.0px;background:#5f86a0"></i><i style="left:1491.6px;top:329.0px;width:0.4px;background:#3f6f9c"></i><i style="left:1473.2px;top:330.7px;width:2.0px;background:#6f8796"></i><i style="left:1469.8px;top:332.4px;width:5.0px;background:#6f8796"></i><i style="left:1475.8px;top:332.4px;width:6.0px;background:#3f6f9c"></i><i style="left:1481.8px;top:332.4px;width:4.0px;background:#6f8796"></i><i style="left:1486.8px;top:332.4px;width:3.0px;background:#3f6f9c"></i><i style="left:1489.8px;top:332.4px;width:2.2px;background:#3f6f9c"></i><i style="left:1469.8px;top:335.8px;width:4.0px;background:#3f6f9c"></i><i style="left:1473.8px;top:335.8px;width:7.0px;background:#4f6a45"></i><i style="left:1481.8px;top:335.8px;width:2.0px;background:#6f8796"></i><i style="left:1469.8px;top:337.5px;width:3.0px;background:#3f6f9c"></i><i style="left:1472.8px;top:337.5px;width:2.0px;background:#4f6a45"></i><i style="left:1474.8px;top:337.5px;width:5.0px;background:#3f6f9c"></i><i style="left:1479.8px;top:337.5px;width:3.0px;background:#3f6f9c"></i><i style="left:1482.8px;top:337.5px;width:2.0px;background:#6f8796"></i><i style="left:1486.8px;top:337.5px;width:5.2px;background:#5a5a5a"></i><i style="left:1466.4px;top:339.2px;width:7.0px;background:#5f86a0"></i><i style="left:1475.4px;top:339.2px;width:3.0px;background:#4f6a45"></i><i style="left:1479.4px;top:339.2px;width:2.0px;background:#86604a"></i><i style="left:1481.4px;top:339.2px;width:7.0px;background:#6a5a78"></i><i style="left:1490.4px;top:339.2px;width:1.6px;background:#5f86a0"></i><i style="left:1466.4px;top:340.9px;width:5.0px;background:#3f6f9c"></i><i style="left:1471.4px;top:340.9px;width:2.0px;background:#86604a"></i><i style="left:1473.4px;top:340.9px;width:7.0px;background:#3f6f9c"></i><i style="left:1480.4px;top:340.9px;width:4.0px;background:#86604a"></i><i style="left:1484.4px;top:340.9px;width:4.0px;background:#4f6a45"></i><i style="left:1489.4px;top:340.9px;width:2.6px;background:#4f6a45"></i><i style="left:1469.8px;top:342.6px;width:6.0px;background:#3f6f9c"></i><i style="left:1475.8px;top:342.6px;width:4.0px;background:#5a5a5a"></i><i style="left:1479.8px;top:342.6px;width:2.0px;background:#3f6f9c"></i><i style="left:1469.8px;top:344.3px;width:7.0px;background:#4f6a45"></i><i style="left:1477.8px;top:344.3px;width:5.0px;background:#4f6a45"></i><i style="left:1482.8px;top:344.3px;width:2.0px;background:#5f86a0"></i><i style="left:1484.8px;top:344.3px;width:6.0px;background:#86604a"></i><i style="left:1490.8px;top:344.3px;width:1.2px;background:#6f8796"></i><i style="left:1469.8px;top:347.7px;width:2.0px;background:#6f8796"></i><i style="left:1466.4px;top:349.4px;width:2.0px;background:#3f6f9c"></i><i style="left:1466.4px;top:351.1px;width:4.0px;background:#5a5a5a"></i><i style="left:1472.4px;top:351.1px;width:2.0px;background:#4a7fae"></i><i style="left:1469.8px;top:354.5px;width:2.0px;background:#4a7fae"></i><i style="left:1466.4px;top:356.2px;width:7.0px;background:#5a5a5a"></i><i style="left:1474.4px;top:356.2px;width:4.0px;background:#3f6f9c"></i><i style="left:1479.4px;top:356.2px;width:4.0px;background:#3f6f9c"></i><i style="left:1484.4px;top:356.2px;width:4.0px;background:#86604a"></i><i style="left:1488.4px;top:356.2px;width:3.6px;background:#3f6f9c"></i><i style="left:1466.4px;top:357.9px;width:6.0px;background:#3f6f9c"></i><i style="left:1473.4px;top:357.9px;width:2.0px;background:#5f86a0"></i><i style="left:1477.4px;top:357.9px;width:2.0px;background:#3f6f9c"></i><i style="left:1480.4px;top:357.9px;width:7.0px;background:#3f6f9c"></i><i style="left:1466.4px;top:359.6px;width:4.0px;background:#3f6f9c"></i><i style="left:1471.4px;top:359.6px;width:2.0px;background:#4f6a45"></i><i style="left:1473.4px;top:359.6px;width:1.0px;background:#3f6f9c"></i><i style="left:1463.0px;top:361.3px;width:3.0px;background:#6a5a78"></i><i style="left:1468.0px;top:361.3px;width:4.0px;background:#4f6a45"></i><i style="left:1473.0px;top:361.3px;width:6.0px;background:#3f6f9c"></i><i style="left:1480.0px;top:361.3px;width:3.0px;background:#5a5a5a"></i><i style="left:1484.0px;top:361.3px;width:3.0px;background:#4a7fae"></i><i style="left:1487.0px;top:361.3px;width:5.0px;background:#4f6a45"></i><i style="left:1463.0px;top:363.0px;width:5.0px;background:#4a7fae"></i><i style="left:1469.0px;top:363.0px;width:7.0px;background:#3f6f9c"></i><i style="left:1477.0px;top:363.0px;width:3.0px;background:#86604a"></i><i style="left:1481.0px;top:363.0px;width:5.0px;background:#4f6a45"></i><i style="left:1488.0px;top:363.0px;width:3.0px;background:#5f86a0"></i><i style="left:1491.0px;top:363.0px;width:1.0px;background:#3f6f9c"></i><i style="left:1463.0px;top:364.7px;width:4.0px;background:#4f6a45"></i><i style="left:1467.0px;top:364.7px;width:3.0px;background:#4f6a45"></i><i style="left:1466.4px;top:366.4px;width:6.0px;background:#5a5a5a"></i><i style="left:1472.4px;top:366.4px;width:4.0px;background:#6a5a78"></i><i style="left:1476.4px;top:366.4px;width:6.0px;background:#5a5a5a"></i><i style="left:1483.4px;top:366.4px;width:4.0px;background:#6f8796"></i><i style="left:1487.4px;top:366.4px;width:4.6px;background:#3f6f9c"></i><i style="left:1466.4px;top:368.1px;width:4.0px;background:#5a5a5a"></i><i style="left:1471.4px;top:368.1px;width:7.0px;background:#4a7fae"></i><i style="left:1478.4px;top:368.1px;width:5.0px;background:#4a7fae"></i><i style="left:1463.0px;top:369.8px;width:5.0px;background:#86604a"></i><i style="left:1468.0px;top:369.8px;width:2.0px;background:#4a7fae"></i><i style="left:1471.0px;top:369.8px;width:3.0px;background:#5f86a0"></i><i style="left:1475.0px;top:369.8px;width:2.0px;background:#3f6f9c"></i><i style="left:1463.0px;top:371.5px;width:7.0px;background:#86604a"></i><i style="left:1471.0px;top:371.5px;width:2.0px;background:#3f6f9c"></i><i style="left:1474.0px;top:371.5px;width:6.0px;background:#5f86a0"></i><i style="left:1480.0px;top:371.5px;width:7.0px;background:#5a5a5a"></i><i style="left:1488.0px;top:371.5px;width:4.0px;background:#6f8796"></i><i style="left:1463.0px;top:373.2px;width:7.0px;background:#6f8796"></i><i style="left:1470.0px;top:373.2px;width:7.0px;background:#3f6f9c"></i><i style="left:1477.0px;top:373.2px;width:5.0px;background:#5f86a0"></i><i style="left:1483.0px;top:373.2px;width:4.0px;background:#4a7fae"></i><i style="left:1488.0px;top:373.2px;width:3.0px;background:#5f86a0"></i><i style="left:1491.0px;top:373.2px;width:1.0px;background:#5f86a0"></i><i style="left:1463.0px;top:374.9px;width:7.0px;background:#3f6f9c"></i><i style="left:1471.0px;top:374.9px;width:2.0px;background:#5f86a0"></i><i style="left:1474.0px;top:374.9px;width:2.0px;background:#3f6f9c"></i><i style="left:1477.0px;top:374.9px;width:5.0px;background:#5a5a5a"></i><i style="left:1463.0px;top:376.6px;width:2.0px;background:#6f8796"></i><i style="left:1466.0px;top:376.6px;width:6.0px;background:#5a5a5a"></i><i style="left:1473.0px;top:376.6px;width:2.0px;background:#3f6f9c"></i><i style="left:1463.0px;top:378.3px;width:3.0px;background:#3f6f9c"></i><i style="left:1467.0px;top:378.3px;width:6.0px;background:#4a7fae"></i><i style="left:1475.0px;top:378.3px;width:4.0px;background:#3f6f9c"></i><i style="left:1480.0px;top:378.3px;width:4.0px;background:#5f86a0"></i><i style="left:1485.0px;top:378.3px;width:2.0px;background:#3f6f9c"></i><i style="left:1487.0px;top:378.3px;width:5.0px;background:#5f86a0"></i><i style="left:1463.0px;top:380.0px;width:5.0px;background:#4f6a45"></i><i style="left:1468.0px;top:380.0px;width:5.0px;background:#6a5a78"></i><i style="left:1473.0px;top:380.0px;width:3.0px;background:#3f6f9c"></i><i style="left:1476.0px;top:380.0px;width:7.0px;background:#5a5a5a"></i><i style="left:1484.0px;top:380.0px;width:7.0px;background:#4f6a45"></i><i style="left:1491.0px;top:380.0px;width:1.0px;background:#3f6f9c"></i><i style="left:1463.0px;top:381.7px;width:3.0px;background:#6a5a78"></i><i style="left:1467.0px;top:381.7px;width:3.0px;background:#86604a"></i><i style="left:1471.0px;top:381.7px;width:7.0px;background:#86604a"></i><i style="left:1479.0px;top:381.7px;width:7.0px;background:#3f6f9c"></i><i style="left:1487.0px;top:381.7px;width:2.0px;background:#86604a"></i><i style="left:1490.0px;top:381.7px;width:2.0px;background:#86604a"></i><i style="left:1463.0px;top:383.4px;width:7.0px;background:#3f6f9c"></i><i style="left:1470.0px;top:383.4px;width:4.0px;background:#5f86a0"></i><i style="left:1474.0px;top:383.4px;width:2.0px;background:#6f8796"></i><i style="left:1477.0px;top:383.4px;width:3.0px;background:#4f6a45"></i><i style="left:1481.0px;top:383.4px;width:7.0px;background:#6f8796"></i><i style="left:1488.0px;top:383.4px;width:4.0px;background:#3f6f9c"></i><i style="left:1463.0px;top:385.1px;width:6.0px;background:#3f6f9c"></i><i style="left:1469.0px;top:385.1px;width:3.0px;background:#6a5a78"></i><i style="left:1473.0px;top:385.1px;width:3.0px;background:#5a5a5a"></i><i style="left:1463.0px;top:386.8px;width:6.0px;background:#4a7fae"></i><i style="left:1471.0px;top:386.8px;width:7.0px;background:#86604a"></i><i style="left:1478.0px;top:386.8px;width:5.0px;background:#5a5a5a"></i><i style="left:1485.0px;top:386.8px;width:2.0px;background:#6a5a78"></i><i style="left:1487.0px;top:386.8px;width:5.0px;background:#4a7fae"></i><i style="left:1463.0px;top:388.5px;width:2.0px;background:#6a5a78"></i><i style="left:1466.0px;top:388.5px;width:3.0px;background:#6a5a78"></i><i style="left:1469.0px;top:388.5px;width:5.0px;background:#3f6f9c"></i><i style="left:1476.0px;top:388.5px;width:6.0px;background:#3f6f9c"></i><i style="left:1482.0px;top:388.5px;width:2.0px;background:#6a5a78"></i><i style="left:1463.0px;top:390.2px;width:5.0px;background:#5f86a0"></i><i style="left:1468.0px;top:390.2px;width:3.0px;background:#3f6f9c"></i><i style="left:1471.0px;top:390.2px;width:2.0px;background:#6f8796"></i><i style="left:1473.0px;top:390.2px;width:7.0px;background:#3f6f9c"></i><i style="left:1480.0px;top:390.2px;width:6.0px;background:#6a5a78"></i><i style="left:1487.0px;top:390.2px;width:3.0px;background:#3f6f9c"></i><i style="left:1490.0px;top:390.2px;width:2.0px;background:#5f86a0"></i><i style="left:1463.0px;top:391.9px;width:6.0px;background:#4f6a45"></i><i style="left:1469.0px;top:391.9px;width:4.0px;background:#5f86a0"></i><i style="left:1474.0px;top:391.9px;width:5.0px;background:#86604a"></i><i style="left:1466.4px;top:395.3px;width:4.0px;background:#4f6a45"></i><i style="left:1471.4px;top:395.3px;width:6.0px;background:#3f6f9c"></i><i style="left:1477.4px;top:395.3px;width:7.0px;background:#6a5a78"></i><i style="left:1484.4px;top:395.3px;width:4.0px;background:#5a5a5a"></i><i style="left:1489.4px;top:395.3px;width:2.6px;background:#86604a"></i><i style="left:1466.4px;top:397.0px;width:6.0px;background:#5f86a0"></i><i style="left:1466.4px;top:398.7px;width:2.0px;background:#5a5a5a"></i><i style="left:1469.4px;top:398.7px;width:6.0px;background:#3f6f9c"></i><i style="left:1477.4px;top:398.7px;width:6.0px;background:#6f8796"></i><i style="left:1484.4px;top:398.7px;width:6.0px;background:#3f6f9c"></i><i style="left:1466.4px;top:400.4px;width:2.0px;background:#6a5a78"></i><i style="left:1469.8px;top:403.8px;width:7.0px;background:#3f6f9c"></i><i style="left:1477.8px;top:403.8px;width:3.0px;background:#86604a"></i><i style="left:1482.8px;top:403.8px;width:7.0px;background:#86604a"></i><i style="left:1490.8px;top:403.8px;width:1.2px;background:#5f86a0"></i><i style="left:1466.4px;top:405.5px;width:2.0px;background:#6a5a78"></i><i style="left:1470.4px;top:405.5px;width:6.0px;background:#3f6f9c"></i><i style="left:1476.4px;top:405.5px;width:5.0px;background:#6f8796"></i><i style="left:1482.4px;top:405.5px;width:5.0px;background:#4a7fae"></i><i style="left:1487.4px;top:405.5px;width:4.6px;background:#5f86a0"></i><i style="left:1466.4px;top:407.2px;width:5.0px;background:#4f6a45"></i><i style="left:1471.4px;top:407.2px;width:2.0px;background:#6a5a78"></i><i style="left:1473.4px;top:407.2px;width:3.0px;background:#3f6f9c"></i><i style="left:1466.4px;top:410.6px;width:2.0px;background:#5a5a5a"></i><i style="left:1468.4px;top:410.6px;width:3.0px;background:#6a5a78"></i><i style="left:1471.4px;top:410.6px;width:4.0px;background:#6f8796"></i><i style="left:1475.4px;top:410.6px;width:5.0px;background:#3f6f9c"></i><i style="left:1480.4px;top:410.6px;width:4.0px;background:#3f6f9c"></i><i style="left:1484.4px;top:410.6px;width:4.0px;background:#4f6a45"></i><i style="left:1489.4px;top:410.6px;width:2.6px;background:#86604a"></i><i style="left:1466.4px;top:412.3px;width:2.0px;background:#6f8796"></i><i style="left:1463.0px;top:414.0px;width:5.0px;background:#6f8796"></i><i style="left:1468.0px;top:414.0px;width:4.0px;background:#3f6f9c"></i><i style="left:1474.0px;top:414.0px;width:7.0px;background:#6a5a78"></i><i style="left:1482.0px;top:414.0px;width:7.0px;background:#3f6f9c"></i><i style="left:1489.0px;top:414.0px;width:2.0px;background:#3f6f9c"></i><i style="left:1491.0px;top:414.0px;width:1.0px;background:#5f86a0"></i><i style="left:1463.0px;top:415.7px;width:6.0px;background:#3f6f9c"></i><i style="left:1470.0px;top:415.7px;width:4.0px;background:#3f6f9c"></i><i style="left:1476.0px;top:415.7px;width:1.0px;background:#6f8796"></i><i style="left:1463.0px;top:417.4px;width:6.0px;background:#86604a"></i><i style="left:1463.0px;top:419.1px;width:5.0px;background:#6f8796"></i><i style="left:1468.0px;top:419.1px;width:5.0px;background:#86604a"></i><i style="left:1473.0px;top:419.1px;width:4.0px;background:#86604a"></i><i style="left:1478.0px;top:419.1px;width:3.0px;background:#3f6f9c"></i><i style="left:1463.0px;top:420.8px;width:3.0px;background:#6f8796"></i><i style="left:1466.0px;top:420.8px;width:4.0px;background:#4f6a45"></i><i style="left:1463.0px;top:422.5px;width:5.0px;background:#5a5a5a"></i><i style="left:1468.0px;top:422.5px;width:4.0px;background:#6f8796"></i><i style="left:1472.0px;top:422.5px;width:7.0px;background:#5f86a0"></i><i style="left:1480.0px;top:422.5px;width:7.0px;background:#5a5a5a"></i><i style="left:1488.0px;top:422.5px;width:4.0px;background:#3f6f9c"></i><i style="left:1463.0px;top:424.2px;width:2.0px;background:#5a5a5a"></i><i style="left:1466.0px;top:424.2px;width:6.0px;background:#4f6a45"></i><i style="left:1473.0px;top:424.2px;width:6.0px;background:#3f6f9c"></i><i style="left:1480.0px;top:424.2px;width:6.0px;background:#6f8796"></i><i style="left:1486.0px;top:424.2px;width:3.0px;background:#5a5a5a"></i><i style="left:1489.0px;top:424.2px;width:2.0px;background:#3f6f9c"></i><i style="left:1463.0px;top:425.9px;width:3.0px;background:#5a5a5a"></i><i style="left:1466.0px;top:425.9px;width:5.0px;background:#3f6f9c"></i><i style="left:1471.0px;top:425.9px;width:4.0px;background:#6a5a78"></i><i style="left:1475.0px;top:425.9px;width:3.0px;background:#3f6f9c"></i><i style="left:1480.0px;top:425.9px;width:1.0px;background:#3f6f9c"></i><i style="left:1463.0px;top:427.6px;width:2.0px;background:#6a5a78"></i><i style="left:1463.0px;top:429.3px;width:5.0px;background:#4a7fae"></i><i style="left:1469.0px;top:429.3px;width:6.0px;background:#6f8796"></i><i style="left:1475.0px;top:429.3px;width:4.0px;background:#3f6f9c"></i><i style="left:1480.0px;top:429.3px;width:3.0px;background:#3f6f9c"></i><i style="left:1484.0px;top:429.3px;width:2.0px;background:#3f6f9c"></i><i style="left:1486.0px;top:429.3px;width:2.0px;background:#4f6a45"></i><i style="left:1489.0px;top:429.3px;width:3.0px;background:#6a5a78"></i><i style="left:1463.0px;top:431.0px;width:7.0px;background:#5f86a0"></i><i style="left:1470.0px;top:431.0px;width:1.0px;background:#4a7fae"></i><i style="left:1463.0px;top:432.7px;width:7.0px;background:#4f6a45"></i><i style="left:1471.0px;top:432.7px;width:3.0px;background:#6a5a78"></i><i style="left:1474.0px;top:432.7px;width:4.0px;background:#5a5a5a"></i><i style="left:1478.0px;top:432.7px;width:3.0px;background:#3f6f9c"></i><i style="left:1482.0px;top:432.7px;width:4.0px;background:#3f6f9c"></i><i style="left:1488.0px;top:432.7px;width:2.0px;background:#3f6f9c"></i><i style="left:1491.0px;top:432.7px;width:1.0px;background:#6a5a78"></i><i style="left:1463.0px;top:436.1px;width:7.0px;background:#86604a"></i><i style="left:1472.0px;top:436.1px;width:6.0px;background:#6a5a78"></i><i style="left:1478.0px;top:436.1px;width:5.0px;background:#3f6f9c"></i><i style="left:1484.0px;top:436.1px;width:4.0px;background:#5f86a0"></i><i style="left:1488.0px;top:436.1px;width:4.0px;background:#6a5a78"></i><i style="left:1466.4px;top:437.8px;width:7.0px;background:#3f6f9c"></i><i style="left:1474.4px;top:437.8px;width:7.0px;background:#5a5a5a"></i><i style="left:1481.4px;top:437.8px;width:3.0px;background:#5a5a5a"></i><i style="left:1484.4px;top:437.8px;width:6.0px;background:#3f6f9c"></i><i style="left:1490.4px;top:437.8px;width:1.6px;background:#4a7fae"></i><i style="left:1466.4px;top:439.5px;width:4.0px;background:#5a5a5a"></i><i style="left:1471.4px;top:439.5px;width:2.0px;background:#3f6f9c"></i><i style="left:1473.4px;top:439.5px;width:4.0px;background:#5a5a5a"></i><i style="left:1477.4px;top:439.5px;width:3.0px;background:#6a5a78"></i><i style="left:1482.4px;top:439.5px;width:3.0px;background:#6a5a78"></i><i style="left:1485.4px;top:439.5px;width:1.0px;background:#5f86a0"></i><i style="left:1469.8px;top:441.2px;width:4.0px;background:#3f6f9c"></i><i style="left:1473.8px;top:441.2px;width:4.0px;background:#6a5a78"></i><i style="left:1477.8px;top:441.2px;width:4.0px;background:#6a5a78"></i><i style="left:1482.8px;top:441.2px;width:2.0px;background:#3f6f9c"></i><i style="left:1486.8px;top:441.2px;width:2.0px;background:#5a5a5a"></i><i style="left:1490.8px;top:441.2px;width:1.2px;background:#86604a"></i><i style="left:1473.2px;top:442.9px;width:4.0px;background:#5a5a5a"></i><i style="left:1477.2px;top:442.9px;width:2.0px;background:#5f86a0"></i><i style="left:1480.2px;top:442.9px;width:5.0px;background:#3f6f9c"></i><i style="left:1485.2px;top:442.9px;width:6.8px;background:#86604a"></i><i style="left:1473.2px;top:444.6px;width:4.0px;background:#4f6a45"></i><i style="left:1477.2px;top:444.6px;width:5.0px;background:#3f6f9c"></i><i style="left:1484.2px;top:444.6px;width:4.0px;background:#3f6f9c"></i><i style="left:1489.2px;top:444.6px;width:2.8px;background:#3f6f9c"></i><i style="left:1476.6px;top:446.3px;width:6.0px;background:#5a5a5a"></i><i style="left:1482.6px;top:446.3px;width:3.0px;background:#6f8796"></i><i style="left:1485.6px;top:446.3px;width:1.0px;background:#6f8796"></i><i style="left:1476.6px;top:448.0px;width:7.0px;background:#5a5a5a"></i><i style="left:1485.6px;top:448.0px;width:4.0px;background:#5a5a5a"></i><i style="left:1489.6px;top:448.0px;width:2.0px;background:#4f6a45"></i><i style="left:1476.6px;top:449.7px;width:4.0px;background:#86604a"></i><i style="left:1481.6px;top:449.7px;width:2.0px;background:#3f6f9c"></i><i style="left:1484.6px;top:449.7px;width:5.0px;background:#3f6f9c"></i><i style="left:1490.6px;top:449.7px;width:1.4px;background:#3f6f9c"></i><i style="left:1476.6px;top:453.1px;width:5.0px;background:#4f6a45"></i><i style="left:1481.6px;top:453.1px;width:1.0px;background:#3f6f9c"></i><i style="left:1476.6px;top:454.8px;width:5.0px;background:#6f8796"></i><i style="left:1481.6px;top:454.8px;width:4.0px;background:#4a7fae"></i><i style="left:1486.6px;top:454.8px;width:5.0px;background:#4f6a45"></i><i style="left:1491.6px;top:454.8px;width:0.4px;background:#4f6a45"></i><i style="left:1480.0px;top:456.5px;width:3.0px;background:#4a7fae"></i><i style="left:1484.0px;top:456.5px;width:4.0px;background:#4f6a45"></i><i style="left:1488.0px;top:456.5px;width:2.0px;background:#4a7fae"></i><i style="left:1490.0px;top:456.5px;width:2.0px;background:#3f6f9c"></i><i style="left:1480.0px;top:458.2px;width:5.0px;background:#4a7fae"></i><i style="left:1486.0px;top:458.2px;width:2.0px;background:#3f6f9c"></i><i style="left:1488.0px;top:458.2px;width:4.0px;background:#4a7fae"></i><i style="left:1476.6px;top:459.9px;width:2.0px;background:#4a7fae"></i><i style="left:1479.6px;top:459.9px;width:3.0px;background:#4f6a45"></i><i style="left:1484.6px;top:459.9px;width:3.0px;background:#5a5a5a"></i><i style="left:1487.6px;top:459.9px;width:4.4px;background:#6f8796"></i><i style="left:1476.6px;top:461.6px;width:7.0px;background:#5f86a0"></i><i style="left:1484.6px;top:461.6px;width:6.0px;background:#6f8796"></i><i style="left:1476.6px;top:465.0px;width:5.0px;background:#5a5a5a"></i><i style="left:1482.6px;top:465.0px;width:7.0px;background:#5f86a0"></i><i style="left:1491.6px;top:465.0px;width:0.4px;background:#5f86a0"></i><i style="left:1476.6px;top:468.4px;width:5.0px;background:#3f6f9c"></i><i style="left:1482.6px;top:468.4px;width:2.0px;background:#4f6a45"></i><i style="left:1484.6px;top:468.4px;width:2.0px;background:#3f6f9c"></i><i style="left:1487.6px;top:468.4px;width:3.0px;background:#4f6a45"></i><i style="left:1490.6px;top:468.4px;width:1.4px;background:#3f6f9c"></i><i style="left:1476.6px;top:470.1px;width:2.0px;background:#3f6f9c"></i><i style="left:1480.6px;top:470.1px;width:3.0px;background:#6f8796"></i><i style="left:1476.6px;top:471.8px;width:4.0px;background:#4a7fae"></i><i style="left:1482.6px;top:471.8px;width:1.0px;background:#5f86a0"></i><i style="left:1476.6px;top:473.5px;width:7.0px;background:#3f6f9c"></i><i style="left:1483.6px;top:473.5px;width:2.0px;background:#6f8796"></i><i style="left:1487.6px;top:473.5px;width:4.0px;background:#4a7fae"></i><i style="left:1476.6px;top:475.2px;width:3.0px;background:#86604a"></i><i style="left:1480.6px;top:475.2px;width:6.0px;background:#86604a"></i><i style="left:1487.6px;top:475.2px;width:3.0px;background:#4a7fae"></i><i style="left:1476.6px;top:476.9px;width:5.0px;background:#5a5a5a"></i><i style="left:1483.6px;top:476.9px;width:7.0px;background:#3f6f9c"></i><i style="left:1491.6px;top:476.9px;width:0.4px;background:#86604a"></i><i style="left:1473.2px;top:478.6px;width:3.0px;background:#5a5a5a"></i><i style="left:1478.2px;top:478.6px;width:6.0px;background:#5f86a0"></i><i style="left:1486.2px;top:478.6px;width:5.0px;background:#3f6f9c"></i><i style="left:1476.6px;top:480.3px;width:5.0px;background:#86604a"></i><i style="left:1482.6px;top:480.3px;width:3.0px;background:#86604a"></i><i style="left:1485.6px;top:480.3px;width:2.0px;background:#3f6f9c"></i><i style="left:1489.6px;top:480.3px;width:2.0px;background:#6f8796"></i><i style="left:1473.2px;top:482.0px;width:5.0px;background:#3f6f9c"></i><i style="left:1478.2px;top:482.0px;width:6.0px;background:#5a5a5a"></i><i style="left:1484.2px;top:482.0px;width:5.0px;background:#3f6f9c"></i><i style="left:1490.2px;top:482.0px;width:1.8px;background:#5a5a5a"></i><i style="left:1473.2px;top:483.7px;width:2.0px;background:#6a5a78"></i><i style="left:1476.2px;top:483.7px;width:7.0px;background:#3f6f9c"></i><i style="left:1484.2px;top:483.7px;width:2.0px;background:#3f6f9c"></i><i style="left:1487.2px;top:483.7px;width:4.8px;background:#6f8796"></i><i style="left:1469.8px;top:485.4px;width:4.0px;background:#6f8796"></i><i style="left:1475.8px;top:485.4px;width:2.0px;background:#5f86a0"></i><i style="left:1478.8px;top:485.4px;width:7.0px;background:#6a5a78"></i><i style="left:1486.8px;top:485.4px;width:5.2px;background:#3f6f9c"></i><i style="left:1466.4px;top:487.1px;width:2.0px;background:#6a5a78"></i><i style="left:1469.4px;top:487.1px;width:5.0px;background:#86604a"></i><i style="left:1474.4px;top:487.1px;width:6.0px;background:#86604a"></i><i style="left:1480.4px;top:487.1px;width:4.0px;background:#6f8796"></i><i style="left:1466.4px;top:488.8px;width:4.0px;background:#6f8796"></i><i style="left:1470.4px;top:488.8px;width:4.0px;background:#5a5a5a"></i><i style="left:1475.4px;top:488.8px;width:2.0px;background:#3f6f9c"></i><i style="left:1477.4px;top:488.8px;width:4.0px;background:#6f8796"></i><i style="left:1482.4px;top:488.8px;width:4.0px;background:#4f6a45"></i><i style="left:1487.4px;top:488.8px;width:4.6px;background:#6f8796"></i><i style="left:1466.4px;top:490.5px;width:5.0px;background:#6a5a78"></i><i style="left:1472.4px;top:490.5px;width:2.0px;background:#6f8796"></i><i style="left:1475.4px;top:490.5px;width:5.0px;background:#3f6f9c"></i><i style="left:1480.4px;top:490.5px;width:6.0px;background:#5a5a5a"></i><i style="left:1486.4px;top:490.5px;width:5.0px;background:#3f6f9c"></i><i style="left:1463.0px;top:492.2px;width:3.0px;background:#5f86a0"></i><i style="left:1467.0px;top:492.2px;width:5.0px;background:#6a5a78"></i><i style="left:1474.0px;top:492.2px;width:6.0px;background:#3f6f9c"></i><i style="left:1482.0px;top:492.2px;width:5.0px;background:#4a7fae"></i><i style="left:1463.0px;top:493.9px;width:2.0px;background:#4f6a45"></i><i style="left:1463.0px;top:497.3px;width:5.0px;background:#3f6f9c"></i><i style="left:1470.0px;top:497.3px;width:4.0px;background:#4f6a45"></i><i style="left:1474.0px;top:497.3px;width:6.0px;background:#5a5a5a"></i><i style="left:1481.0px;top:497.3px;width:3.0px;background:#3f6f9c"></i><i style="left:1463.0px;top:499.0px;width:7.0px;background:#3f6f9c"></i><i style="left:1471.0px;top:499.0px;width:2.0px;background:#3f6f9c"></i><i style="left:1474.0px;top:499.0px;width:7.0px;background:#4f6a45"></i><i style="left:1481.0px;top:499.0px;width:4.0px;background:#5f86a0"></i><i style="left:1485.0px;top:499.0px;width:6.0px;background:#3f6f9c"></i><i style="left:1491.0px;top:499.0px;width:1.0px;background:#3f6f9c"></i><i style="left:1463.0px;top:500.7px;width:3.0px;background:#6f8796"></i><i style="left:1466.0px;top:500.7px;width:5.0px;background:#6f8796"></i><i style="left:1471.0px;top:500.7px;width:3.0px;background:#3f6f9c"></i><i style="left:1476.0px;top:500.7px;width:6.0px;background:#4a7fae"></i><i style="left:1482.0px;top:500.7px;width:2.0px;background:#4a7fae"></i><i style="left:1484.0px;top:500.7px;width:2.0px;background:#6a5a78"></i><i style="left:1463.0px;top:502.4px;width:7.0px;background:#6f8796"></i><i style="left:1466.4px;top:504.1px;width:2.0px;background:#86604a"></i><i style="left:1468.4px;top:504.1px;width:6.0px;background:#4a7fae"></i><i style="left:1475.4px;top:504.1px;width:3.0px;background:#6a5a78"></i><i style="left:1480.4px;top:504.1px;width:5.0px;background:#3f6f9c"></i><i style="left:1485.4px;top:504.1px;width:3.0px;background:#5f86a0"></i><i style="left:1490.4px;top:504.1px;width:1.6px;background:#6a5a78"></i><i style="left:1466.4px;top:505.8px;width:2.0px;background:#3f6f9c"></i><i style="left:1466.4px;top:509.2px;width:4.0px;background:#6a5a78"></i><i style="left:1470.4px;top:509.2px;width:3.0px;background:#5f86a0"></i><i style="left:1475.4px;top:509.2px;width:3.0px;background:#5f86a0"></i><i style="left:1479.4px;top:509.2px;width:5.0px;background:#6a5a78"></i><i style="left:1484.4px;top:509.2px;width:3.0px;background:#4a7fae"></i><i style="left:1487.4px;top:509.2px;width:3.0px;background:#3f6f9c"></i><i style="left:1491.4px;top:509.2px;width:0.6px;background:#3f6f9c"></i><i style="left:1463.0px;top:510.9px;width:5.0px;background:#3f6f9c"></i><i style="left:1469.0px;top:510.9px;width:7.0px;background:#4a7fae"></i><i style="left:1476.0px;top:510.9px;width:5.0px;background:#3f6f9c"></i><i style="left:1483.0px;top:510.9px;width:3.0px;background:#5f86a0"></i><i style="left:1486.0px;top:510.9px;width:5.0px;background:#86604a"></i><i style="left:1466.4px;top:512.6px;width:4.0px;background:#3f6f9c"></i><i style="left:1470.4px;top:512.6px;width:7.0px;background:#3f6f9c"></i><i style="left:1477.4px;top:512.6px;width:3.0px;background:#86604a"></i><i style="left:1482.4px;top:512.6px;width:3.0px;background:#4f6a45"></i><i style="left:1486.4px;top:512.6px;width:5.0px;background:#5a5a5a"></i><i style="left:1491.4px;top:512.6px;width:0.6px;background:#3f6f9c"></i><i style="left:1466.4px;top:514.3px;width:3.0px;background:#86604a"></i><i style="left:1470.4px;top:514.3px;width:6.0px;background:#5a5a5a"></i><i style="left:1476.4px;top:514.3px;width:5.0px;background:#3f6f9c"></i><i style="left:1482.4px;top:514.3px;width:6.0px;background:#6a5a78"></i><i style="left:1490.4px;top:514.3px;width:1.6px;background:#4f6a45"></i><i style="left:1463.0px;top:516.0px;width:2.0px;background:#4f6a45"></i><i style="left:1465.0px;top:516.0px;width:6.0px;background:#86604a"></i><i style="left:1472.0px;top:516.0px;width:2.0px;background:#6f8796"></i><i style="left:1474.0px;top:516.0px;width:4.0px;background:#3f6f9c"></i><i style="left:1479.0px;top:516.0px;width:7.0px;background:#4a7fae"></i><i style="left:1486.0px;top:516.0px;width:3.0px;background:#3f6f9c"></i><i style="left:1489.0px;top:516.0px;width:3.0px;background:#4a7fae"></i><i style="left:1463.0px;top:517.7px;width:4.0px;background:#5a5a5a"></i><i style="left:1467.0px;top:517.7px;width:7.0px;background:#86604a"></i><i style="left:1474.0px;top:517.7px;width:3.0px;background:#86604a"></i><i style="left:1477.0px;top:517.7px;width:7.0px;background:#5f86a0"></i><i style="left:1485.0px;top:517.7px;width:4.0px;background:#5f86a0"></i><i style="left:1490.0px;top:517.7px;width:2.0px;background:#3f6f9c"></i><i style="left:1466.4px;top:519.4px;width:7.0px;background:#3f6f9c"></i><i style="left:1474.4px;top:519.4px;width:2.0px;background:#6a5a78"></i><i style="left:1476.4px;top:519.4px;width:5.0px;background:#3f6f9c"></i><i style="left:1481.4px;top:519.4px;width:3.0px;background:#86604a"></i><i style="left:1484.4px;top:519.4px;width:4.0px;background:#6f8796"></i><i style="left:1488.4px;top:519.4px;width:3.6px;background:#3f6f9c"></i><i style="left:1469.8px;top:522.8px;width:5.0px;background:#3f6f9c"></i><i style="left:1476.8px;top:522.8px;width:4.0px;background:#3f6f9c"></i><i style="left:1482.8px;top:522.8px;width:3.0px;background:#6f8796"></i><i style="left:1486.8px;top:522.8px;width:5.2px;background:#4f6a45"></i><i style="left:1469.8px;top:524.5px;width:2.0px;background:#4a7fae"></i><i style="left:1472.8px;top:524.5px;width:2.0px;background:#6f8796"></i><i style="left:1476.8px;top:524.5px;width:7.0px;background:#3f6f9c"></i><i style="left:1483.8px;top:524.5px;width:7.0px;background:#4a7fae"></i><i style="left:1490.8px;top:524.5px;width:1.2px;background:#5a5a5a"></i><i style="left:1469.8px;top:526.2px;width:7.0px;background:#6f8796"></i><i style="left:1476.8px;top:526.2px;width:4.0px;background:#4f6a45"></i><i style="left:1480.8px;top:526.2px;width:4.0px;background:#5f86a0"></i><i style="left:1485.8px;top:526.2px;width:4.0px;background:#4f6a45"></i><i style="left:1490.8px;top:526.2px;width:1.2px;background:#3f6f9c"></i><i style="left:1466.4px;top:527.9px;width:3.0px;background:#6a5a78"></i><i style="left:1469.4px;top:527.9px;width:2.0px;background:#4f6a45"></i><i style="left:1472.4px;top:527.9px;width:3.0px;background:#4f6a45"></i><i style="left:1475.4px;top:527.9px;width:7.0px;background:#5a5a5a"></i><i style="left:1484.4px;top:527.9px;width:4.0px;background:#5a5a5a"></i><i style="left:1488.4px;top:527.9px;width:3.0px;background:#3f6f9c"></i><i style="left:1463.0px;top:529.6px;width:3.0px;background:#6a5a78"></i><i style="left:1467.0px;top:529.6px;width:3.0px;background:#5a5a5a"></i><i style="left:1470.0px;top:529.6px;width:6.0px;background:#6a5a78"></i><i style="left:1476.0px;top:529.6px;width:7.0px;background:#3f6f9c"></i><i style="left:1484.0px;top:529.6px;width:3.0px;background:#3f6f9c"></i><i style="left:1489.0px;top:529.6px;width:3.0px;background:#5a5a5a"></i><i style="left:1463.0px;top:531.3px;width:3.0px;background:#3f6f9c"></i><i style="left:1468.0px;top:531.3px;width:5.0px;background:#5f86a0"></i><i style="left:1473.0px;top:531.3px;width:2.0px;background:#86604a"></i><i style="left:1475.0px;top:531.3px;width:4.0px;background:#6a5a78"></i><i style="left:1479.0px;top:531.3px;width:2.0px;background:#3f6f9c"></i><i style="left:1482.0px;top:531.3px;width:4.0px;background:#5a5a5a"></i><i style="left:1486.0px;top:531.3px;width:6.0px;background:#86604a"></i><i style="left:1463.0px;top:533.0px;width:6.0px;background:#3f6f9c"></i><i style="left:1470.0px;top:533.0px;width:3.0px;background:#4f6a45"></i><i style="left:1473.0px;top:533.0px;width:2.0px;background:#3f6f9c"></i><i style="left:1476.0px;top:533.0px;width:5.0px;background:#4a7fae"></i><i style="left:1482.0px;top:533.0px;width:7.0px;background:#6f8796"></i><i style="left:1490.0px;top:533.0px;width:2.0px;background:#6a5a78"></i><i style="left:1463.0px;top:534.7px;width:2.0px;background:#86604a"></i><i style="left:1463.0px;top:536.4px;width:2.0px;background:#3f6f9c"></i><i style="left:1465.0px;top:536.4px;width:2.0px;background:#5f86a0"></i><i style="left:1467.0px;top:536.4px;width:4.0px;background:#3f6f9c"></i><i style="left:1471.0px;top:536.4px;width:6.0px;background:#4f6a45"></i><i style="left:1463.0px;top:539.8px;width:5.0px;background:#3f6f9c"></i><i style="left:1469.0px;top:539.8px;width:4.0px;background:#5a5a5a"></i><i style="left:1474.0px;top:539.8px;width:3.0px;background:#4f6a45"></i><i style="left:1478.0px;top:539.8px;width:4.0px;background:#5a5a5a"></i><i style="left:1482.0px;top:539.8px;width:2.0px;background:#4a7fae"></i><i style="left:1486.0px;top:539.8px;width:6.0px;background:#5f86a0"></i><i style="left:1463.0px;top:541.5px;width:3.0px;background:#86604a"></i><i style="left:1468.0px;top:541.5px;width:6.0px;background:#4a7fae"></i><i style="left:1474.0px;top:541.5px;width:7.0px;background:#5a5a5a"></i><i style="left:1481.0px;top:541.5px;width:3.0px;background:#6a5a78"></i><i style="left:1485.0px;top:541.5px;width:2.0px;background:#3f6f9c"></i><i style="left:1488.0px;top:541.5px;width:4.0px;background:#5a5a5a"></i><i style="left:1463.0px;top:543.2px;width:6.0px;background:#5f86a0"></i><i style="left:1469.0px;top:543.2px;width:4.0px;background:#4a7fae"></i><i style="left:1473.0px;top:543.2px;width:6.0px;background:#5f86a0"></i><i style="left:1480.0px;top:543.2px;width:2.0px;background:#6a5a78"></i><i style="left:1482.0px;top:543.2px;width:7.0px;background:#3f6f9c"></i><i style="left:1489.0px;top:543.2px;width:3.0px;background:#86604a"></i><i style="left:1463.0px;top:544.9px;width:5.0px;background:#4a7fae"></i><i style="left:1470.0px;top:544.9px;width:4.0px;background:#4f6a45"></i><i style="left:1475.0px;top:544.9px;width:5.0px;background:#4f6a45"></i><i style="left:1463.0px;top:546.6px;width:2.0px;background:#3f6f9c"></i><i style="left:1467.0px;top:546.6px;width:4.0px;background:#86604a"></i><i style="left:1463.0px;top:548.3px;width:3.0px;background:#86604a"></i><i style="left:1467.0px;top:548.3px;width:6.0px;background:#3f6f9c"></i><i style="left:1473.0px;top:548.3px;width:3.0px;background:#6a5a78"></i><i style="left:1476.0px;top:548.3px;width:3.0px;background:#6f8796"></i><i style="left:1480.0px;top:548.3px;width:4.0px;background:#6f8796"></i><i style="left:1463.0px;top:550.0px;width:4.0px;background:#4a7fae"></i><i style="left:1467.0px;top:550.0px;width:3.0px;background:#5a5a5a"></i><i style="left:1472.0px;top:550.0px;width:7.0px;background:#4a7fae"></i><i style="left:1479.0px;top:550.0px;width:4.0px;background:#4a7fae"></i><i style="left:1483.0px;top:550.0px;width:6.0px;background:#86604a"></i><i style="left:1490.0px;top:550.0px;width:2.0px;background:#4f6a45"></i><i style="left:1466.4px;top:551.7px;width:6.0px;background:#6f8796"></i><i style="left:1472.4px;top:551.7px;width:3.0px;background:#4a7fae"></i><i style="left:1469.8px;top:553.4px;width:2.0px;background:#4f6a45"></i><i style="left:1471.8px;top:553.4px;width:5.0px;background:#5f86a0"></i><i style="left:1478.8px;top:553.4px;width:3.0px;background:#5a5a5a"></i><i style="left:1483.8px;top:553.4px;width:5.0px;background:#4a7fae"></i><i style="left:1488.8px;top:553.4px;width:3.2px;background:#6f8796"></i><i style="left:1466.4px;top:555.1px;width:2.0px;background:#6f8796"></i><i style="left:1463.0px;top:556.8px;width:2.0px;background:#6f8796"></i><i style="left:1465.0px;top:556.8px;width:6.0px;background:#4a7fae"></i><i style="left:1472.0px;top:556.8px;width:3.0px;background:#3f6f9c"></i><i style="left:1476.0px;top:556.8px;width:7.0px;background:#3f6f9c"></i><i style="left:1484.0px;top:556.8px;width:2.0px;background:#5a5a5a"></i><i style="left:1487.0px;top:556.8px;width:5.0px;background:#4f6a45"></i><i style="left:1463.0px;top:558.5px;width:2.0px;background:#3f6f9c"></i><i style="left:1467.0px;top:558.5px;width:4.0px;background:#6f8796"></i><i style="left:1471.0px;top:558.5px;width:2.0px;background:#5a5a5a"></i><i style="left:1474.0px;top:558.5px;width:4.0px;background:#5a5a5a"></i><i style="left:1479.0px;top:558.5px;width:2.0px;background:#6f8796"></i><i style="left:1482.0px;top:558.5px;width:2.0px;background:#3f6f9c"></i><i style="left:1485.0px;top:558.5px;width:2.0px;background:#4a7fae"></i><i style="left:1488.0px;top:558.5px;width:3.0px;background:#3f6f9c"></i><i style="left:1463.0px;top:560.2px;width:6.0px;background:#86604a"></i><i style="left:1471.0px;top:560.2px;width:7.0px;background:#86604a"></i><i style="left:1479.0px;top:560.2px;width:2.0px;background:#3f6f9c"></i><i style="left:1463.0px;top:561.9px;width:2.0px;background:#3f6f9c"></i><i style="left:1465.0px;top:561.9px;width:3.0px;background:#6f8796"></i><i style="left:1470.0px;top:561.9px;width:5.0px;background:#6a5a78"></i><i style="left:1475.0px;top:561.9px;width:7.0px;background:#6a5a78"></i><i style="left:1483.0px;top:561.9px;width:3.0px;background:#6f8796"></i><i style="left:1488.0px;top:561.9px;width:2.0px;background:#3f6f9c"></i><i style="left:1491.0px;top:561.9px;width:1.0px;background:#5a5a5a"></i><i style="left:1463.0px;top:563.6px;width:4.0px;background:#6a5a78"></i><i style="left:1468.0px;top:563.6px;width:2.0px;background:#6a5a78"></i><i style="left:1463.0px;top:565.3px;width:5.0px;background:#3f6f9c"></i><i style="left:1468.0px;top:565.3px;width:2.0px;background:#5a5a5a"></i><i style="left:1471.0px;top:565.3px;width:6.0px;background:#3f6f9c"></i><i style="left:1477.0px;top:565.3px;width:7.0px;background:#3f6f9c"></i><i style="left:1485.0px;top:565.3px;width:5.0px;background:#86604a"></i><i style="left:1490.0px;top:565.3px;width:2.0px;background:#86604a"></i><i style="left:1463.0px;top:567.0px;width:7.0px;background:#3f6f9c"></i><i style="left:1472.0px;top:567.0px;width:2.0px;background:#5a5a5a"></i><i style="left:1475.0px;top:567.0px;width:7.0px;background:#6f8796"></i><i style="left:1482.0px;top:567.0px;width:4.0px;background:#86604a"></i><i style="left:1486.0px;top:567.0px;width:3.0px;background:#4a7fae"></i><i style="left:1490.0px;top:567.0px;width:2.0px;background:#3f6f9c"></i><i style="left:1463.0px;top:568.7px;width:7.0px;background:#5f86a0"></i><i style="left:1471.0px;top:568.7px;width:2.0px;background:#3f6f9c"></i><i style="left:1474.0px;top:568.7px;width:5.0px;background:#4f6a45"></i><i style="left:1480.0px;top:568.7px;width:3.0px;background:#5a5a5a"></i><i style="left:1484.0px;top:568.7px;width:3.0px;background:#3f6f9c"></i><i style="left:1487.0px;top:568.7px;width:2.0px;background:#6a5a78"></i><i style="left:1490.0px;top:568.7px;width:2.0px;background:#5f86a0"></i><i style="left:1463.0px;top:570.4px;width:2.0px;background:#86604a"></i><i style="left:1463.0px;top:572.1px;width:2.0px;background:#6f8796"></i><i style="left:1463.0px;top:573.8px;width:5.0px;background:#3f6f9c"></i><i style="left:1469.0px;top:573.8px;width:7.0px;background:#4a7fae"></i><i style="left:1477.0px;top:573.8px;width:4.0px;background:#3f6f9c"></i><i style="left:1482.0px;top:573.8px;width:4.0px;background:#4f6a45"></i><i style="left:1486.0px;top:573.8px;width:3.0px;background:#86604a"></i><i style="left:1489.0px;top:573.8px;width:3.0px;background:#3f6f9c"></i><i style="left:1463.0px;top:577.2px;width:7.0px;background:#4a7fae"></i><i style="left:1470.0px;top:577.2px;width:3.0px;background:#3f6f9c"></i><i style="left:1473.0px;top:577.2px;width:5.0px;background:#3f6f9c"></i><i style="left:1463.0px;top:580.6px;width:2.0px;background:#4f6a45"></i><i style="left:1463.0px;top:582.3px;width:7.0px;background:#3f6f9c"></i><i style="left:1471.0px;top:582.3px;width:4.0px;background:#6f8796"></i><i style="left:1466.4px;top:584.0px;width:6.0px;background:#3f6f9c"></i><i style="left:1466.4px;top:585.7px;width:2.0px;background:#3f6f9c"></i><i style="left:1469.4px;top:585.7px;width:6.0px;background:#3f6f9c"></i><i style="left:1475.4px;top:585.7px;width:5.0px;background:#6f8796"></i><i style="left:1481.4px;top:585.7px;width:3.0px;background:#4a7fae"></i><i style="left:1484.4px;top:585.7px;width:3.0px;background:#5a5a5a"></i><i style="left:1487.4px;top:585.7px;width:4.6px;background:#4a7fae"></i><i style="left:1466.4px;top:587.4px;width:6.0px;background:#4f6a45"></i><i style="left:1472.4px;top:587.4px;width:7.0px;background:#6f8796"></i><i style="left:1481.4px;top:587.4px;width:4.0px;background:#5a5a5a"></i><i style="left:1487.4px;top:587.4px;width:4.0px;background:#6a5a78"></i><i style="left:1491.4px;top:587.4px;width:0.6px;background:#86604a"></i><i style="left:1466.4px;top:589.1px;width:6.0px;background:#4f6a45"></i><i style="left:1473.4px;top:589.1px;width:3.0px;background:#86604a"></i><i style="left:1476.4px;top:589.1px;width:6.0px;background:#6a5a78"></i><i style="left:1482.4px;top:589.1px;width:7.0px;background:#3f6f9c"></i><i style="left:1489.4px;top:589.1px;width:2.6px;background:#5a5a5a"></i><i style="left:1466.4px;top:590.8px;width:2.0px;background:#4a7fae"></i><i style="left:1466.4px;top:592.5px;width:4.0px;background:#6f8796"></i><i style="left:1471.4px;top:592.5px;width:7.0px;background:#3f6f9c"></i><i style="left:1478.4px;top:592.5px;width:7.0px;background:#3f6f9c"></i><i style="left:1487.4px;top:592.5px;width:2.0px;background:#3f6f9c"></i><i style="left:1489.4px;top:592.5px;width:2.6px;background:#6a5a78"></i><i style="left:1466.4px;top:594.2px;width:5.0px;background:#5a5a5a"></i><i style="left:1472.4px;top:594.2px;width:2.0px;background:#4a7fae"></i><i style="left:1474.4px;top:594.2px;width:2.0px;background:#5f86a0"></i><i style="left:1477.4px;top:594.2px;width:2.0px;background:#5a5a5a"></i><i style="left:1481.4px;top:594.2px;width:5.0px;background:#5f86a0"></i><i style="left:1487.4px;top:594.2px;width:4.6px;background:#5a5a5a"></i><i style="left:1469.8px;top:595.9px;width:3.0px;background:#3f6f9c"></i><i style="left:1472.8px;top:595.9px;width:4.0px;background:#5f86a0"></i><i style="left:1477.8px;top:595.9px;width:4.0px;background:#6a5a78"></i><i style="left:1481.8px;top:595.9px;width:6.0px;background:#3f6f9c"></i><i style="left:1488.8px;top:595.9px;width:3.2px;background:#3f6f9c"></i><i style="left:1473.2px;top:597.6px;width:3.0px;background:#3f6f9c"></i><i style="left:1477.2px;top:597.6px;width:7.0px;background:#6f8796"></i><i style="left:1486.2px;top:597.6px;width:5.0px;background:#5a5a5a"></i><i style="left:1473.2px;top:601.0px;width:2.0px;background:#3f6f9c"></i><i style="left:1473.2px;top:602.7px;width:2.0px;background:#3f6f9c"></i><i style="left:1475.2px;top:602.7px;width:3.0px;background:#86604a"></i><i style="left:1478.2px;top:602.7px;width:6.0px;background:#3f6f9c"></i><i style="left:1484.2px;top:602.7px;width:3.0px;background:#6a5a78"></i><i style="left:1469.8px;top:606.1px;width:2.0px;background:#6f8796"></i><i style="left:1471.8px;top:606.1px;width:3.0px;background:#3f6f9c"></i><i style="left:1474.8px;top:606.1px;width:3.0px;background:#4f6a45"></i><i style="left:1479.8px;top:606.1px;width:3.0px;background:#6f8796"></i><i style="left:1483.8px;top:606.1px;width:4.0px;background:#4a7fae"></i><i style="left:1469.8px;top:609.5px;width:5.0px;background:#3f6f9c"></i><i style="left:1476.8px;top:609.5px;width:5.0px;background:#3f6f9c"></i><i style="left:1481.8px;top:609.5px;width:3.0px;background:#4f6a45"></i><i style="left:1484.8px;top:609.5px;width:7.0px;background:#4f6a45"></i><i style="left:1469.8px;top:611.2px;width:2.0px;background:#3f6f9c"></i><i style="left:1471.8px;top:611.2px;width:3.0px;background:#4a7fae"></i><i style="left:1475.8px;top:611.2px;width:7.0px;background:#3f6f9c"></i><i style="left:1482.8px;top:611.2px;width:4.0px;background:#86604a"></i><i style="left:1486.8px;top:611.2px;width:2.0px;background:#5a5a5a"></i><i style="left:1490.8px;top:611.2px;width:1.2px;background:#5f86a0"></i><i style="left:1469.8px;top:612.9px;width:2.0px;background:#6a5a78"></i><i style="left:1473.8px;top:612.9px;width:4.0px;background:#4f6a45"></i><i style="left:1478.8px;top:612.9px;width:7.0px;background:#5f86a0"></i><i style="left:1486.8px;top:612.9px;width:5.0px;background:#5f86a0"></i><i style="left:1469.8px;top:614.6px;width:5.0px;background:#5f86a0"></i><i style="left:1474.8px;top:614.6px;width:7.0px;background:#3f6f9c"></i><i style="left:1481.8px;top:614.6px;width:6.0px;background:#4f6a45"></i><i style="left:1488.8px;top:614.6px;width:3.2px;background:#6f8796"></i><i style="left:1469.8px;top:616.3px;width:6.0px;background:#3f6f9c"></i><i style="left:1475.8px;top:616.3px;width:3.0px;background:#4f6a45"></i><i style="left:1469.8px;top:618.0px;width:5.0px;background:#6f8796"></i><i style="left:1474.8px;top:618.0px;width:5.0px;background:#6a5a78"></i><i style="left:1481.8px;top:618.0px;width:4.0px;background:#6f8796"></i><i style="left:1487.8px;top:618.0px;width:4.2px;background:#5a5a5a"></i><i style="left:1466.4px;top:619.7px;width:4.0px;background:#6f8796"></i><i style="left:1471.4px;top:619.7px;width:2.0px;background:#4f6a45"></i><i style="left:1473.4px;top:619.7px;width:6.0px;background:#86604a"></i><i style="left:1480.4px;top:619.7px;width:5.0px;background:#3f6f9c"></i><i style="left:1487.4px;top:619.7px;width:4.6px;background:#6a5a78"></i><i style="left:1469.8px;top:621.4px;width:6.0px;background:#3f6f9c"></i><i style="left:1477.8px;top:621.4px;width:3.0px;background:#4f6a45"></i><i style="left:1480.8px;top:621.4px;width:4.0px;background:#5a5a5a"></i><i style="left:1484.8px;top:621.4px;width:3.0px;background:#6a5a78"></i><i style="left:1487.8px;top:621.4px;width:4.2px;background:#3f6f9c"></i><i style="left:1466.4px;top:623.1px;width:3.0px;background:#86604a"></i><i style="left:1470.4px;top:623.1px;width:2.0px;background:#3f6f9c"></i><i style="left:1473.4px;top:623.1px;width:7.0px;background:#4f6a45"></i><i style="left:1482.4px;top:623.1px;width:3.0px;background:#6a5a78"></i><i style="left:1469.8px;top:624.8px;width:2.0px;background:#6a5a78"></i><i style="left:1472.8px;top:624.8px;width:7.0px;background:#3f6f9c"></i><i style="left:1481.8px;top:624.8px;width:3.0px;background:#3f6f9c"></i><i style="left:1484.8px;top:624.8px;width:4.0px;background:#6a5a78"></i><i style="left:1490.8px;top:624.8px;width:1.2px;background:#5a5a5a"></i><i style="left:1466.4px;top:626.5px;width:2.0px;background:#4f6a45"></i><i style="left:1468.4px;top:626.5px;width:2.0px;background:#6f8796"></i><i style="left:1471.4px;top:626.5px;width:2.0px;background:#6f8796"></i><i style="left:1473.4px;top:626.5px;width:4.0px;background:#4f6a45"></i><i style="left:1478.4px;top:626.5px;width:4.0px;background:#86604a"></i><i style="left:1482.4px;top:626.5px;width:4.0px;background:#6a5a78"></i><i style="left:1486.4px;top:626.5px;width:5.6px;background:#6a5a78"></i><i style="left:1469.8px;top:628.2px;width:6.0px;background:#3f6f9c"></i><i style="left:1475.8px;top:628.2px;width:7.0px;background:#6a5a78"></i><i style="left:1483.8px;top:628.2px;width:4.0px;background:#3f6f9c"></i><i style="left:1488.8px;top:628.2px;width:3.2px;background:#5f86a0"></i><i style="left:1469.8px;top:629.9px;width:6.0px;background:#3f6f9c"></i><i style="left:1477.8px;top:629.9px;width:3.0px;background:#6f8796"></i><i style="left:1481.8px;top:629.9px;width:2.0px;background:#5a5a5a"></i><i style="left:1484.8px;top:629.9px;width:2.0px;background:#4a7fae"></i><i style="left:1487.8px;top:629.9px;width:4.2px;background:#5f86a0"></i><i style="left:1466.4px;top:631.6px;width:6.0px;background:#6a5a78"></i><i style="left:1466.4px;top:633.3px;width:3.0px;background:#4a7fae"></i><i style="left:1470.4px;top:633.3px;width:5.0px;background:#6a5a78"></i><i style="left:1475.4px;top:633.3px;width:6.0px;background:#3f6f9c"></i><i style="left:1481.4px;top:633.3px;width:7.0px;background:#5a5a5a"></i><i style="left:1489.4px;top:633.3px;width:2.6px;background:#3f6f9c"></i><i style="left:1466.4px;top:635.0px;width:3.0px;background:#4a7fae"></i><i style="left:1471.4px;top:635.0px;width:2.0px;background:#4a7fae"></i><i style="left:1474.4px;top:635.0px;width:2.0px;background:#5a5a5a"></i><i style="left:1478.4px;top:635.0px;width:5.0px;background:#3f6f9c"></i><i style="left:1483.4px;top:635.0px;width:3.0px;background:#3f6f9c"></i><i style="left:1466.4px;top:636.7px;width:3.0px;background:#5f86a0"></i><i style="left:1469.4px;top:636.7px;width:7.0px;background:#3f6f9c"></i><i style="left:1477.4px;top:636.7px;width:4.0px;background:#5a5a5a"></i><i style="left:1483.4px;top:636.7px;width:2.0px;background:#3f6f9c"></i><i style="left:1469.8px;top:638.4px;width:4.0px;background:#86604a"></i><i style="left:1475.8px;top:638.4px;width:5.0px;background:#4f6a45"></i><i style="left:1481.8px;top:638.4px;width:7.0px;background:#3f6f9c"></i><i style="left:1489.8px;top:638.4px;width:2.2px;background:#5a5a5a"></i><i style="left:1469.8px;top:640.1px;width:3.0px;background:#3f6f9c"></i><i style="left:1472.8px;top:640.1px;width:6.0px;background:#3f6f9c"></i><i style="left:1479.8px;top:640.1px;width:4.0px;background:#6a5a78"></i><i style="left:1473.2px;top:641.8px;width:7.0px;background:#4f6a45"></i><i style="left:1480.2px;top:641.8px;width:7.0px;background:#3f6f9c"></i><i style="left:1487.2px;top:641.8px;width:2.0px;background:#4a7fae"></i><i style="left:1473.2px;top:643.5px;width:5.0px;background:#86604a"></i><i style="left:1478.2px;top:643.5px;width:2.0px;background:#5a5a5a"></i><i style="left:1473.2px;top:645.2px;width:3.0px;background:#5a5a5a"></i><i style="left:1476.2px;top:645.2px;width:3.0px;background:#5f86a0"></i><i style="left:1479.2px;top:645.2px;width:2.0px;background:#3f6f9c"></i><i style="left:1481.2px;top:645.2px;width:6.0px;background:#6a5a78"></i><i style="left:1487.2px;top:645.2px;width:2.0px;background:#4f6a45"></i><i style="left:1489.2px;top:645.2px;width:2.8px;background:#5a5a5a"></i><i style="left:1473.2px;top:646.9px;width:7.0px;background:#5a5a5a"></i><i style="left:1482.2px;top:646.9px;width:2.0px;background:#6a5a78"></i><i style="left:1484.2px;top:646.9px;width:3.0px;background:#4a7fae"></i><i style="left:1487.2px;top:646.9px;width:4.8px;background:#5a5a5a"></i><i style="left:1473.2px;top:648.6px;width:2.0px;background:#3f6f9c"></i><i style="left:1475.2px;top:648.6px;width:3.0px;background:#6a5a78"></i><i style="left:1479.2px;top:648.6px;width:3.0px;background:#6f8796"></i><i style="left:1483.2px;top:648.6px;width:7.0px;background:#4f6a45"></i><i style="left:1490.2px;top:648.6px;width:1.8px;background:#86604a"></i><i style="left:1473.2px;top:650.3px;width:7.0px;background:#5a5a5a"></i><i style="left:1481.2px;top:650.3px;width:2.0px;background:#3f6f9c"></i><i style="left:1484.2px;top:650.3px;width:3.0px;background:#86604a"></i><i style="left:1487.2px;top:650.3px;width:4.8px;background:#4f6a45"></i><i style="left:1476.6px;top:652.0px;width:4.0px;background:#5f86a0"></i><i style="left:1480.6px;top:652.0px;width:2.0px;background:#3f6f9c"></i><i style="left:1482.6px;top:652.0px;width:7.0px;background:#5a5a5a"></i><i style="left:1491.6px;top:652.0px;width:0.4px;background:#4a7fae"></i><i style="left:1473.2px;top:653.7px;width:2.0px;background:#5a5a5a"></i><i style="left:1476.2px;top:653.7px;width:4.0px;background:#86604a"></i><i style="left:1482.2px;top:653.7px;width:6.0px;background:#4f6a45"></i><i style="left:1488.2px;top:653.7px;width:3.0px;background:#3f6f9c"></i><i style="left:1476.6px;top:655.4px;width:4.0px;background:#3f6f9c"></i><i style="left:1482.6px;top:655.4px;width:6.0px;background:#4a7fae"></i><i style="left:1488.6px;top:655.4px;width:1.0px;background:#5a5a5a"></i><i style="left:1476.6px;top:657.1px;width:5.0px;background:#6a5a78"></i><i style="left:1481.6px;top:657.1px;width:4.0px;background:#3f6f9c"></i><i style="left:1485.6px;top:657.1px;width:2.0px;background:#86604a"></i><i style="left:1487.6px;top:657.1px;width:4.4px;background:#4f6a45"></i><i style="left:1476.6px;top:660.5px;width:2.0px;background:#3f6f9c"></i><i style="left:1480.6px;top:660.5px;width:6.0px;background:#4a7fae"></i><i style="left:1487.6px;top:660.5px;width:4.4px;background:#3f6f9c"></i><i style="left:1476.6px;top:662.2px;width:7.0px;background:#3f6f9c"></i><i style="left:1484.6px;top:662.2px;width:3.0px;background:#4a7fae"></i><i style="left:1488.6px;top:662.2px;width:2.0px;background:#6a5a78"></i><i style="left:1491.6px;top:662.2px;width:0.4px;background:#86604a"></i><i style="left:1480.0px;top:665.6px;width:6.0px;background:#4a7fae"></i><i style="left:1487.0px;top:665.6px;width:5.0px;background:#5a5a5a"></i><i style="left:1480.0px;top:667.3px;width:3.0px;background:#86604a"></i><i style="left:1484.0px;top:667.3px;width:6.0px;background:#5a5a5a"></i><i style="left:1490.0px;top:667.3px;width:2.0px;background:#4f6a45"></i><i style="left:1476.6px;top:669.0px;width:2.0px;background:#6a5a78"></i><i style="left:1480.6px;top:669.0px;width:3.0px;background:#5a5a5a"></i><i style="left:1483.6px;top:669.0px;width:3.0px;background:#3f6f9c"></i><i style="left:1487.6px;top:669.0px;width:2.0px;background:#5f86a0"></i><i style="left:1490.6px;top:669.0px;width:1.4px;background:#4f6a45"></i><i style="left:1480.0px;top:670.7px;width:3.0px;background:#5a5a5a"></i><i style="left:1483.0px;top:670.7px;width:5.0px;background:#4f6a45"></i><i style="left:1480.0px;top:672.4px;width:2.0px;background:#3f6f9c"></i><i style="left:1482.0px;top:672.4px;width:6.0px;background:#3f6f9c"></i><i style="left:1489.0px;top:672.4px;width:3.0px;background:#4a7fae"></i><i style="left:1480.0px;top:674.1px;width:5.0px;background:#5f86a0"></i><i style="left:1485.0px;top:674.1px;width:2.0px;background:#5a5a5a"></i><i style="left:1487.0px;top:674.1px;width:5.0px;background:#4f6a45"></i><i style="left:1476.6px;top:675.8px;width:3.0px;background:#5a5a5a"></i><i style="left:1480.6px;top:675.8px;width:7.0px;background:#4a7fae"></i><i style="left:1487.6px;top:675.8px;width:4.4px;background:#3f6f9c"></i><i style="left:1476.6px;top:677.5px;width:2.0px;background:#4a7fae"></i><i style="left:1476.6px;top:679.2px;width:5.0px;background:#4a7fae"></i><i style="left:1482.6px;top:679.2px;width:6.0px;background:#3f6f9c"></i><i style="left:1489.6px;top:679.2px;width:2.4px;background:#6a5a78"></i><i style="left:1480.0px;top:680.9px;width:7.0px;background:#6a5a78"></i><i style="left:1489.0px;top:680.9px;width:3.0px;background:#5f86a0"></i><i style="left:1480.0px;top:682.6px;width:6.0px;background:#4f6a45"></i><i style="left:1486.0px;top:682.6px;width:2.0px;background:#86604a"></i><i style="left:1488.0px;top:682.6px;width:3.0px;background:#5a5a5a"></i><i style="left:1480.0px;top:684.3px;width:7.0px;background:#3f6f9c"></i><i style="left:1488.0px;top:684.3px;width:4.0px;background:#5f86a0"></i><i style="left:1476.6px;top:686.0px;width:4.0px;background:#6f8796"></i><i style="left:1481.6px;top:686.0px;width:4.0px;background:#3f6f9c"></i><i style="left:1486.6px;top:686.0px;width:5.0px;background:#6f8796"></i><i style="left:1491.6px;top:686.0px;width:0.4px;background:#6a5a78"></i><i style="left:1473.2px;top:687.7px;width:6.0px;background:#5a5a5a"></i><i style="left:1479.2px;top:687.7px;width:4.0px;background:#5f86a0"></i><i style="left:1484.2px;top:687.7px;width:6.0px;background:#3f6f9c"></i><i style="left:1491.2px;top:687.7px;width:0.8px;background:#4a7fae"></i><i style="left:1476.6px;top:689.4px;width:3.0px;background:#4a7fae"></i><i style="left:1479.6px;top:689.4px;width:7.0px;background:#3f6f9c"></i><i style="left:1487.6px;top:689.4px;width:3.0px;background:#5f86a0"></i><i style="left:1491.6px;top:689.4px;width:0.4px;background:#3f6f9c"></i><i style="left:1480.0px;top:691.1px;width:4.0px;background:#4f6a45"></i><i style="left:1486.0px;top:691.1px;width:3.0px;background:#3f6f9c"></i><i style="left:1490.0px;top:691.1px;width:2.0px;background:#3f6f9c"></i><i style="left:1476.6px;top:694.5px;width:7.0px;background:#4a7fae"></i><i style="left:1485.6px;top:694.5px;width:5.0px;background:#4f6a45"></i><i style="left:1480.0px;top:696.2px;width:2.0px;background:#4f6a45"></i><i style="left:1484.0px;top:696.2px;width:4.0px;background:#6a5a78"></i><i style="left:1489.0px;top:696.2px;width:3.0px;background:#3f6f9c"></i><i style="left:1480.0px;top:697.9px;width:2.0px;background:#6a5a78"></i><i style="left:1483.0px;top:697.9px;width:4.0px;background:#3f6f9c"></i><i style="left:1487.0px;top:697.9px;width:5.0px;background:#4a7fae"></i><i style="left:1476.6px;top:699.6px;width:7.0px;background:#6a5a78"></i><i style="left:1483.6px;top:699.6px;width:3.0px;background:#6a5a78"></i><i style="left:1476.6px;top:703.0px;width:6.0px;background:#4f6a45"></i><i style="left:1482.6px;top:703.0px;width:5.0px;background:#3f6f9c"></i><i style="left:1489.6px;top:703.0px;width:2.4px;background:#86604a"></i><i style="left:1480.0px;top:704.7px;width:5.0px;background:#4a7fae"></i><i style="left:1486.0px;top:704.7px;width:5.0px;background:#3f6f9c"></i></div>
</div></div>
<div id="shadow"></div>
<div id="redbox"></div>

<div id="xz">
 <svg class="abs" style="left:0;top:0" width="64" height="62" viewBox="0 0 64 62">
  <path d="M0.4 9.2H30.7L0.4 59.5Z" fill="#646464"/><path d="M49 0V50.1H18.7Z" fill="#646464"/>
 </svg>
 <div class="tx">先知社区</div>
</div>

<div id="wmtop">
<span class="wm" style="left:-112.7px;top:99.1px">零组资料文库</span>
<span class="wm" style="left:67.6px;top:-4.6px">零组资料文库</span>
<span class="wm" style="left:19.0px;top:119.0px">零组资料文库</span>
<span class="wm" style="left:199.3px;top:15.3px">零组资料文库</span>
<span class="wm" style="left:150.7px;top:138.8px">零组资料文库</span>
<span class="wm" style="left:331.0px;top:35.1px">零组资料文库</span>
<span class="wm" style="left:462.7px;top:55.0px">零组资料文库</span>
<span class="wm" style="left:594.4px;top:74.9px">零组资料文库</span>
<span class="wm" style="left:726.1px;top:94.8px">零组资料文库</span>
<span class="wm" style="left:906.4px;top:-8.9px">零组资料文库</span>
<span class="wm" style="left:857.8px;top:114.6px">零组资料文库</span>
<span class="wm" style="left:1038.1px;top:10.9px">零组资料文库</span>
<span class="wm" style="left:989.5px;top:134.5px">零组资料文库</span>
<span class="wm" style="left:1169.8px;top:30.8px">零组资料文库</span>
<span class="wm" style="left:1301.5px;top:50.7px">零组资料文库</span>
<span class="wm" style="left:1433.2px;top:70.5px">零组资料文库</span>
</div>
<div id="wm">
<span class="wm" style="left:-112.7px;top:55.1px">零组资料文库</span>
<span class="wm" style="left:-161.3px;top:178.7px">零组资料文库</span>
<span class="wm" style="left:67.6px;top:-48.6px">零组资料文库</span>
<span class="wm" style="left:19.0px;top:75.0px">零组资料文库</span>
<span class="wm" style="left:-29.6px;top:198.5px">零组资料文库</span>
<span class="wm" style="left:-78.2px;top:322.1px">零组资料文库</span>
<span class="wm" style="left:-126.8px;top:445.7px">零组资料文库</span>
<span class="wm" style="left:199.3px;top:-28.7px">零组资料文库</span>
<span class="wm" style="left:150.7px;top:94.8px">零组资料文库</span>
<span class="wm" style="left:102.1px;top:218.4px">零组资料文库</span>
<span class="wm" style="left:53.5px;top:342.0px">零组资料文库</span>
<span class="wm" style="left:4.9px;top:465.6px">零组资料文库</span>
<span class="wm" style="left:-43.7px;top:589.1px">零组资料文库</span>
<span class="wm" style="left:-92.3px;top:712.7px">零组资料文库</span>
<span class="wm" style="left:331.0px;top:-8.9px">零组资料文库</span>
<span class="wm" style="left:282.4px;top:114.7px">零组资料文库</span>
<span class="wm" style="left:233.8px;top:238.3px">零组资料文库</span>
<span class="wm" style="left:185.2px;top:361.9px">零组资料文库</span>
<span class="wm" style="left:136.6px;top:485.4px">零组资料文库</span>
<span class="wm" style="left:88.0px;top:609.0px">零组资料文库</span>
<span class="wm" style="left:39.4px;top:732.6px">零组资料文库</span>
<span class="wm" style="left:462.7px;top:11.0px">零组资料文库</span>
<span class="wm" style="left:414.1px;top:134.6px">零组资料文库</span>
<span class="wm" style="left:365.5px;top:258.2px">零组资料文库</span>
<span class="wm" style="left:316.9px;top:381.7px">零组资料文库</span>
<span class="wm" style="left:268.3px;top:505.3px">零组资料文库</span>
<span class="wm" style="left:219.7px;top:628.9px">零组资料文库</span>
<span class="wm" style="left:171.1px;top:752.4px">零组资料文库</span>
<span class="wm" style="left:594.4px;top:30.9px">零组资料文库</span>
<span class="wm" style="left:545.8px;top:154.5px">零组资料文库</span>
<span class="wm" style="left:497.2px;top:278.0px">零组资料文库</span>
<span class="wm" style="left:448.6px;top:401.6px">零组资料文库</span>
<span class="wm" style="left:400.0px;top:525.2px">零组资料文库</span>
<span class="wm" style="left:351.4px;top:648.7px">零组资料文库</span>
<span class="wm" style="left:726.1px;top:50.8px">零组资料文库</span>
<span class="wm" style="left:677.5px;top:174.3px">零组资料文库</span>
<span class="wm" style="left:628.9px;top:297.9px">零组资料文库</span>
<span class="wm" style="left:580.3px;top:421.5px">零组资料文库</span>
<span class="wm" style="left:531.7px;top:545.0px">零组资料文库</span>
<span class="wm" style="left:483.1px;top:668.6px">零组资料文库</span>
<span class="wm" style="left:906.4px;top:-52.9px">零组资料文库</span>
<span class="wm" style="left:857.8px;top:70.6px">零组资料文库</span>
<span class="wm" style="left:809.2px;top:194.2px">零组资料文库</span>
<span class="wm" style="left:760.6px;top:317.8px">零组资料文库</span>
<span class="wm" style="left:712.0px;top:441.3px">零组资料文库</span>
<span class="wm" style="left:663.4px;top:564.9px">零组资料文库</span>
<span class="wm" style="left:614.8px;top:688.5px">零组资料文库</span>
<span class="wm" style="left:1038.1px;top:-33.1px">零组资料文库</span>
<span class="wm" style="left:989.5px;top:90.5px">零组资料文库</span>
<span class="wm" style="left:940.9px;top:214.1px">零组资料文库</span>
<span class="wm" style="left:892.3px;top:337.6px">零组资料文库</span>
<span class="wm" style="left:843.7px;top:461.2px">零组资料文库</span>
<span class="wm" style="left:795.1px;top:584.8px">零组资料文库</span>
<span class="wm" style="left:746.5px;top:708.3px">零组资料文库</span>
<span class="wm" style="left:1169.8px;top:-13.2px">零组资料文库</span>
<span class="wm" style="left:1121.2px;top:110.4px">零组资料文库</span>
<span class="wm" style="left:1072.6px;top:233.9px">零组资料文库</span>
<span class="wm" style="left:1024.0px;top:357.5px">零组资料文库</span>
<span class="wm" style="left:975.4px;top:481.1px">零组资料文库</span>
<span class="wm" style="left:926.8px;top:604.6px">零组资料文库</span>
<span class="wm" style="left:878.2px;top:728.2px">零组资料文库</span>
<span class="wm" style="left:1301.5px;top:6.7px">零组资料文库</span>
<span class="wm" style="left:1252.9px;top:130.2px">零组资料文库</span>
<span class="wm" style="left:1204.3px;top:253.8px">零组资料文库</span>
<span class="wm" style="left:1155.7px;top:377.4px">零组资料文库</span>
<span class="wm" style="left:1107.1px;top:501.0px">零组资料文库</span>
<span class="wm" style="left:1058.5px;top:624.5px">零组资料文库</span>
<span class="wm" style="left:1009.9px;top:748.1px">零组资料文库</span>
<span class="wm" style="left:1433.2px;top:26.5px">零组资料文库</span>
<span class="wm" style="left:1384.6px;top:150.1px">零组资料文库</span>
<span class="wm" style="left:1336.0px;top:273.7px">零组资料文库</span>
<span class="wm" style="left:1287.4px;top:397.2px">零组资料文库</span>
<span class="wm" style="left:1238.8px;top:520.8px">零组资料文库</span>
<span class="wm" style="left:1190.2px;top:644.4px">零组资料文库</span>
<span class="wm" style="left:1467.7px;top:293.6px">零组资料文库</span>
<span class="wm" style="left:1419.1px;top:417.1px">零组资料文库</span>
<span class="wm" style="left:1370.5px;top:540.7px">零组资料文库</span>
<span class="wm" style="left:1321.9px;top:664.3px">零组资料文库</span>
<span class="wm" style="left:1453.6px;top:684.1px">零组资料文库</span>
</div>
</body>
</html>
